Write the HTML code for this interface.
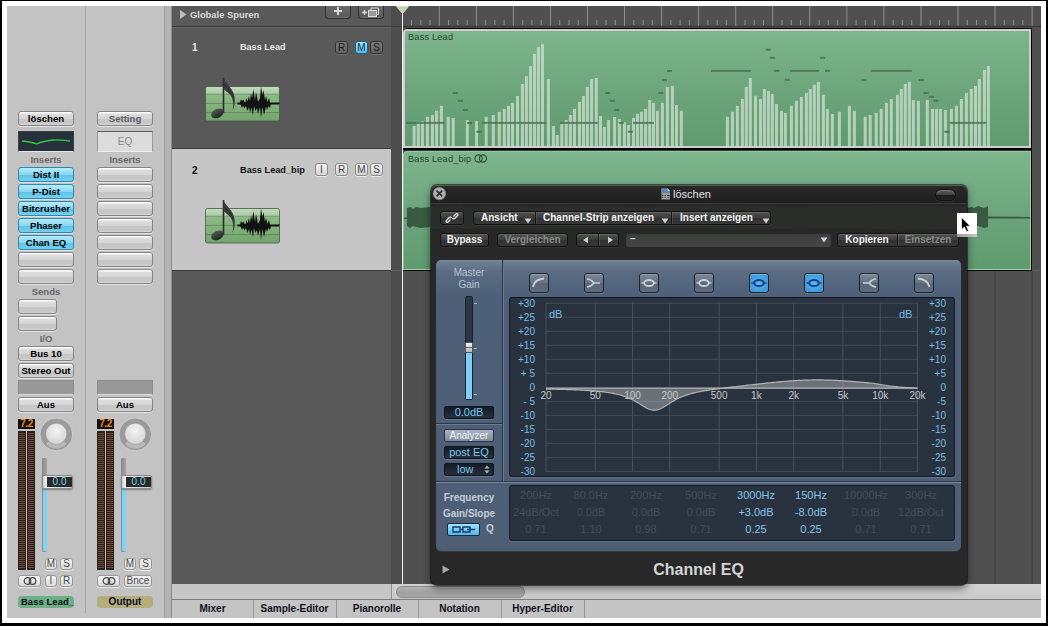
<!DOCTYPE html><html><head><meta charset="utf-8"><style>
*{margin:0;padding:0;box-sizing:border-box}
html,body{width:1048px;height:626px;overflow:hidden;background:#000}
body{position:relative;font-family:"Liberation Sans",sans-serif}
div{position:absolute}
.t{white-space:nowrap;line-height:1}
svg{position:absolute;overflow:visible}
</style></head><body>
<div style="left:2px;top:1px;width:1044px;height:622px;background:#fff"></div>
<div style="left:7px;top:6px;width:1034px;height:612px;background:#c3c3c3"></div>
<div style="left:85px;top:6px;width:1px;height:607px;background:#a6a6a6"></div>
<div style="left:164px;top:6px;width:1px;height:612px;background:#9c9c9c"></div>
<div style="left:165px;top:6px;width:6px;height:612px;background:#b3b3b3"></div>
<div style="left:171px;top:6px;width:1px;height:612px;background:#8e8e8e"></div>
<div style="left:172px;top:6px;width:219px;height:578px;background:#595959"></div>
<div style="left:172px;top:26px;width:219px;height:1px;background:#3b3b3b"></div>
<div style="left:172px;top:27px;width:219px;height:1px;background:#666"></div>
<div style="left:172px;top:148px;width:219px;height:1px;background:#3b3b3b"></div>
<div style="left:172px;top:149px;width:219px;height:121px;background:#c6c6c6"></div>
<div style="left:172px;top:270px;width:219px;height:1px;background:#3b3b3b"></div>
<div style="left:391px;top:6px;width:11px;height:578px;background:#4d4d4d"></div>
<div style="left:391px;top:26px;width:11px;height:1px;background:#3b3b3b"></div>
<div style="left:391px;top:270px;width:11px;height:1px;background:#5e5e5e"></div>
<div style="left:403px;top:6px;width:638px;height:578px;background:#505050"></div>
<div style="left:1032px;top:270px;width:9px;height:1px;background:#5e5e5e"></div>
<div style="left:403px;top:26px;width:638px;height:1px;background:#333"></div>
<div style="left:402px;top:6px;width:1px;height:578px;background:#f0f0f0"></div>
<svg style="left:403px;top:6px" width="638" height="22"><rect x="8.0" y="14" width="1" height="5" fill="#8f8f8f"/><rect x="17.3" y="14" width="1" height="5" fill="#8f8f8f"/><rect x="26.5" y="14" width="1" height="5" fill="#8f8f8f"/><rect x="35.8" y="0" width="1" height="20" fill="#8f8f8f"/><rect x="45.1" y="14" width="1" height="5" fill="#8f8f8f"/><rect x="54.3" y="14" width="1" height="5" fill="#8f8f8f"/><rect x="63.6" y="14" width="1" height="5" fill="#8f8f8f"/><rect x="72.9" y="0" width="1" height="20" fill="#8f8f8f"/><rect x="82.1" y="14" width="1" height="5" fill="#8f8f8f"/><rect x="91.4" y="14" width="1" height="5" fill="#8f8f8f"/><rect x="100.6" y="14" width="1" height="5" fill="#8f8f8f"/><rect x="109.9" y="0" width="1" height="20" fill="#8f8f8f"/><rect x="119.2" y="14" width="1" height="5" fill="#8f8f8f"/><rect x="128.4" y="14" width="1" height="5" fill="#8f8f8f"/><rect x="137.7" y="14" width="1" height="5" fill="#8f8f8f"/><rect x="147.0" y="0" width="1" height="20" fill="#8f8f8f"/><rect x="156.2" y="14" width="1" height="5" fill="#8f8f8f"/><rect x="165.5" y="14" width="1" height="5" fill="#8f8f8f"/><rect x="174.7" y="14" width="1" height="5" fill="#8f8f8f"/><rect x="184.0" y="0" width="1" height="20" fill="#8f8f8f"/><rect x="193.3" y="14" width="1" height="5" fill="#8f8f8f"/><rect x="202.5" y="14" width="1" height="5" fill="#8f8f8f"/><rect x="211.8" y="14" width="1" height="5" fill="#8f8f8f"/><rect x="221.0" y="0" width="1" height="20" fill="#8f8f8f"/><rect x="230.3" y="14" width="1" height="5" fill="#8f8f8f"/><rect x="239.6" y="14" width="1" height="5" fill="#8f8f8f"/><rect x="248.8" y="14" width="1" height="5" fill="#8f8f8f"/><rect x="258.1" y="0" width="1" height="20" fill="#8f8f8f"/><rect x="267.4" y="14" width="1" height="5" fill="#8f8f8f"/><rect x="276.6" y="14" width="1" height="5" fill="#8f8f8f"/><rect x="285.9" y="14" width="1" height="5" fill="#8f8f8f"/><rect x="295.1" y="0" width="1" height="20" fill="#8f8f8f"/><rect x="304.4" y="14" width="1" height="5" fill="#8f8f8f"/><rect x="313.7" y="14" width="1" height="5" fill="#8f8f8f"/><rect x="322.9" y="14" width="1" height="5" fill="#8f8f8f"/><rect x="332.2" y="0" width="1" height="20" fill="#8f8f8f"/><rect x="341.5" y="14" width="1" height="5" fill="#8f8f8f"/><rect x="350.7" y="14" width="1" height="5" fill="#8f8f8f"/><rect x="360.0" y="14" width="1" height="5" fill="#8f8f8f"/><rect x="369.2" y="0" width="1" height="20" fill="#8f8f8f"/><rect x="378.5" y="14" width="1" height="5" fill="#8f8f8f"/><rect x="387.8" y="14" width="1" height="5" fill="#8f8f8f"/><rect x="397.0" y="14" width="1" height="5" fill="#8f8f8f"/><rect x="406.3" y="0" width="1" height="20" fill="#8f8f8f"/><rect x="415.6" y="14" width="1" height="5" fill="#8f8f8f"/><rect x="424.8" y="14" width="1" height="5" fill="#8f8f8f"/><rect x="434.1" y="14" width="1" height="5" fill="#8f8f8f"/><rect x="443.3" y="0" width="1" height="20" fill="#8f8f8f"/><rect x="452.6" y="14" width="1" height="5" fill="#8f8f8f"/><rect x="461.9" y="14" width="1" height="5" fill="#8f8f8f"/><rect x="471.1" y="14" width="1" height="5" fill="#8f8f8f"/><rect x="480.4" y="0" width="1" height="20" fill="#8f8f8f"/><rect x="489.7" y="14" width="1" height="5" fill="#8f8f8f"/><rect x="498.9" y="14" width="1" height="5" fill="#8f8f8f"/><rect x="508.2" y="14" width="1" height="5" fill="#8f8f8f"/><rect x="517.5" y="0" width="1" height="20" fill="#8f8f8f"/><rect x="526.7" y="14" width="1" height="5" fill="#8f8f8f"/><rect x="536.0" y="14" width="1" height="5" fill="#8f8f8f"/><rect x="545.2" y="14" width="1" height="5" fill="#8f8f8f"/><rect x="554.5" y="0" width="1" height="20" fill="#8f8f8f"/><rect x="563.8" y="14" width="1" height="5" fill="#8f8f8f"/><rect x="573.0" y="14" width="1" height="5" fill="#8f8f8f"/><rect x="582.3" y="14" width="1" height="5" fill="#8f8f8f"/><rect x="591.5" y="0" width="1" height="20" fill="#8f8f8f"/><rect x="600.8" y="14" width="1" height="5" fill="#8f8f8f"/><rect x="610.1" y="14" width="1" height="5" fill="#8f8f8f"/><rect x="619.3" y="14" width="1" height="5" fill="#8f8f8f"/><rect x="628.6" y="0" width="1" height="20" fill="#8f8f8f"/></svg>
<svg style="left:396px;top:6px" width="13" height="9"><path d="M0.5 0.5 L12.5 0.5 L6.5 7.5 Z" fill="#b6d8a8" stroke="#e8f3e0" stroke-width="0.8"/></svg>
<svg style="left:403px;top:271px" width="638" height="313"><rect x="35.8" y="0" width="1" height="313" fill="#3e3e3e"/><rect x="72.9" y="0" width="1" height="313" fill="#3e3e3e"/><rect x="109.9" y="0" width="1" height="313" fill="#3e3e3e"/><rect x="147.0" y="0" width="1" height="313" fill="#3e3e3e"/><rect x="184.0" y="0" width="1" height="313" fill="#3e3e3e"/><rect x="221.0" y="0" width="1" height="313" fill="#3e3e3e"/><rect x="258.1" y="0" width="1" height="313" fill="#3e3e3e"/><rect x="295.1" y="0" width="1" height="313" fill="#3e3e3e"/><rect x="332.2" y="0" width="1" height="313" fill="#3e3e3e"/><rect x="369.2" y="0" width="1" height="313" fill="#3e3e3e"/><rect x="406.3" y="0" width="1" height="313" fill="#3e3e3e"/><rect x="443.3" y="0" width="1" height="313" fill="#3e3e3e"/><rect x="480.4" y="0" width="1" height="313" fill="#3e3e3e"/><rect x="517.5" y="0" width="1" height="313" fill="#3e3e3e"/><rect x="554.5" y="0" width="1" height="313" fill="#3e3e3e"/><rect x="591.5" y="0" width="1" height="313" fill="#3e3e3e"/><rect x="628.6" y="0" width="1" height="313" fill="#3e3e3e"/></svg>
<div style="left:403px;top:28px;width:629px;height:122px;background:#000;border-radius:5px 0 0 0"></div>
<div style="left:403px;top:29px;width:628px;height:119px;background:linear-gradient(#7db68c,#6aa37a 60%,#609b6f);border:2px solid #cfcfcf;border-right-width:2px;border-radius:4px 0 0 0"></div>
<div style="left:403px;top:150px;width:629px;height:121px;background:#000;border-radius:5px 0 0 0"></div>
<div style="left:404px;top:150px;width:627px;height:1px;background:#3a3a3a"></div>
<div style="left:403px;top:151px;width:628px;height:119px;background:linear-gradient(#7db68c,#6aa37a 60%,#609b6f);border-right:1px solid #9ad4a4;border-bottom:1px solid #9ad4a4;border-radius:4px 0 0 0;box-shadow:inset 1px 1px 0 rgba(160,220,170,.5)"></div>
<div class="t" style="left:408px;top:33px;font-size:9.2px;letter-spacing:0.2px;color:#2a4434">Bass Lead</div>
<div class="t" style="left:408px;top:155px;font-size:9.2px;letter-spacing:0.2px;color:#2a4434">Bass Lead_bip</div>
<svg style="left:474px;top:154px" width="14" height="9"><circle cx="4.5" cy="4.5" r="3.6" fill="none" stroke="#2f4a38" stroke-width="1.1"/><circle cx="9" cy="4.5" r="3.6" fill="none" stroke="#2f4a38" stroke-width="1.1"/></svg>
<svg style="left:404px;top:29px" width="627" height="118"><rect x="8.6" y="97.0" width="3" height="20.0" fill="#cfe0cf" fill-opacity="0.75"/><rect x="12.8" y="92.8" width="3" height="24.2" fill="#cfe0cf" fill-opacity="0.75"/><rect x="16.9" y="92.2" width="3" height="24.8" fill="#cfe0cf" fill-opacity="0.75"/><rect x="21.9" y="87.8" width="3" height="29.2" fill="#cfe0cf" fill-opacity="0.75"/><rect x="26.9" y="86.0" width="3" height="31.0" fill="#cfe0cf" fill-opacity="0.75"/><rect x="31.1" y="81.8" width="3" height="35.2" fill="#cfe0cf" fill-opacity="0.75"/><rect x="35.9" y="76.8" width="3" height="40.2" fill="#cfe0cf" fill-opacity="0.75"/><rect x="42.7" y="87.8" width="3" height="29.2" fill="#cfe0cf" fill-opacity="0.75"/><rect x="47.7" y="88.9" width="3" height="28.1" fill="#cfe0cf" fill-opacity="0.75"/><rect x="61.8" y="91.0" width="3" height="26.0" fill="#cfe0cf" fill-opacity="0.75"/><rect x="71.0" y="92.0" width="3" height="25.0" fill="#cfe0cf" fill-opacity="0.75"/><rect x="80.7" y="87.8" width="3" height="29.2" fill="#cfe0cf" fill-opacity="0.75"/><rect x="87.8" y="86.0" width="3" height="31.0" fill="#cfe0cf" fill-opacity="0.75"/><rect x="93.8" y="82.9" width="3" height="34.1" fill="#cfe0cf" fill-opacity="0.75"/><rect x="98.8" y="80.0" width="3" height="37.0" fill="#cfe0cf" fill-opacity="0.75"/><rect x="103.0" y="76.8" width="3" height="40.2" fill="#cfe0cf" fill-opacity="0.75"/><rect x="107.0" y="73.9" width="3" height="43.1" fill="#cfe0cf" fill-opacity="0.75"/><rect x="112.0" y="67.0" width="3" height="50.0" fill="#cfe0cf" fill-opacity="0.75"/><rect x="116.9" y="55.0" width="3" height="62.0" fill="#cfe0cf" fill-opacity="0.75"/><rect x="120.9" y="47.1" width="3" height="69.9" fill="#cfe0cf" fill-opacity="0.75"/><rect x="125.0" y="37.0" width="3" height="80.0" fill="#cfe0cf" fill-opacity="0.75"/><rect x="129.0" y="24.9" width="3" height="92.1" fill="#cfe0cf" fill-opacity="0.75"/><rect x="132.9" y="18.0" width="3" height="99.0" fill="#cfe0cf" fill-opacity="0.75"/><rect x="137.0" y="14.9" width="3" height="102.1" fill="#cfe0cf" fill-opacity="0.75"/><rect x="142.9" y="50.0" width="3" height="67.0" fill="#cfe0cf" fill-opacity="0.75"/><rect x="147.9" y="97.0" width="3" height="20.0" fill="#cfe0cf" fill-opacity="0.75"/><rect x="151.8" y="106.0" width="3" height="11.0" fill="#cfe0cf" fill-opacity="0.75"/><rect x="156.3" y="94.9" width="3" height="22.1" fill="#cfe0cf" fill-opacity="0.75"/><rect x="160.7" y="91.0" width="3" height="26.0" fill="#cfe0cf" fill-opacity="0.75"/><rect x="164.9" y="86.0" width="3" height="31.0" fill="#cfe0cf" fill-opacity="0.75"/><rect x="169.0" y="79.9" width="3" height="37.1" fill="#cfe0cf" fill-opacity="0.75"/><rect x="174.0" y="72.9" width="3" height="44.1" fill="#cfe0cf" fill-opacity="0.75"/><rect x="178.0" y="67.0" width="3" height="50.0" fill="#cfe0cf" fill-opacity="0.75"/><rect x="181.9" y="57.9" width="3" height="59.1" fill="#cfe0cf" fill-opacity="0.75"/><rect x="186.1" y="50.0" width="3" height="67.0" fill="#cfe0cf" fill-opacity="0.75"/><rect x="190.8" y="49.0" width="3" height="68.0" fill="#cfe0cf" fill-opacity="0.75"/><rect x="195.0" y="87.0" width="3" height="30.0" fill="#cfe0cf" fill-opacity="0.75"/><rect x="198.9" y="98.0" width="3" height="19.0" fill="#cfe0cf" fill-opacity="0.75"/><rect x="203.1" y="91.0" width="3" height="26.0" fill="#cfe0cf" fill-opacity="0.75"/><rect x="209.1" y="88.0" width="3" height="29.0" fill="#cfe0cf" fill-opacity="0.75"/><rect x="213.9" y="89.9" width="3" height="27.1" fill="#cfe0cf" fill-opacity="0.75"/><rect x="218.9" y="93.0" width="3" height="24.0" fill="#cfe0cf" fill-opacity="0.75"/><rect x="223.0" y="96.0" width="3" height="21.0" fill="#cfe0cf" fill-opacity="0.75"/><rect x="228.0" y="88.9" width="3" height="28.1" fill="#cfe0cf" fill-opacity="0.75"/><rect x="232.0" y="84.9" width="3" height="32.1" fill="#cfe0cf" fill-opacity="0.75"/><rect x="235.9" y="82.8" width="3" height="34.2" fill="#cfe0cf" fill-opacity="0.75"/><rect x="240.1" y="79.9" width="3" height="37.1" fill="#cfe0cf" fill-opacity="0.75"/><rect x="244.2" y="71.0" width="3" height="46.0" fill="#cfe0cf" fill-opacity="0.75"/><rect x="248.0" y="73.9" width="3" height="43.1" fill="#cfe0cf" fill-opacity="0.75"/><rect x="251.9" y="81.8" width="3" height="35.2" fill="#cfe0cf" fill-opacity="0.75"/><rect x="256.9" y="73.9" width="3" height="43.1" fill="#cfe0cf" fill-opacity="0.75"/><rect x="261.9" y="57.9" width="3" height="59.1" fill="#cfe0cf" fill-opacity="0.75"/><rect x="266.9" y="56.9" width="3" height="60.1" fill="#cfe0cf" fill-opacity="0.75"/><rect x="271.0" y="76.0" width="3" height="41.0" fill="#cfe0cf" fill-opacity="0.75"/><rect x="275.8" y="81.8" width="3" height="35.2" fill="#cfe0cf" fill-opacity="0.75"/><rect x="321.9" y="87.8" width="3" height="29.2" fill="#cfe0cf" fill-opacity="0.75"/><rect x="326.9" y="82.8" width="3" height="34.2" fill="#cfe0cf" fill-opacity="0.75"/><rect x="331.9" y="76.8" width="3" height="40.2" fill="#cfe0cf" fill-opacity="0.75"/><rect x="336.9" y="70.0" width="3" height="47.0" fill="#cfe0cf" fill-opacity="0.75"/><rect x="340.8" y="57.9" width="3" height="59.1" fill="#cfe0cf" fill-opacity="0.75"/><rect x="344.8" y="49.0" width="3" height="68.0" fill="#cfe0cf" fill-opacity="0.75"/><rect x="350.0" y="66.8" width="3" height="50.2" fill="#cfe0cf" fill-opacity="0.75"/><rect x="355.0" y="70.0" width="3" height="47.0" fill="#cfe0cf" fill-opacity="0.75"/><rect x="358.9" y="60.0" width="3" height="57.0" fill="#cfe0cf" fill-opacity="0.75"/><rect x="362.9" y="61.9" width="3" height="55.1" fill="#cfe0cf" fill-opacity="0.75"/><rect x="366.8" y="65.0" width="3" height="52.0" fill="#cfe0cf" fill-opacity="0.75"/><rect x="371.0" y="75.0" width="3" height="42.0" fill="#cfe0cf" fill-opacity="0.75"/><rect x="376.0" y="81.8" width="3" height="35.2" fill="#cfe0cf" fill-opacity="0.75"/><rect x="379.9" y="83.9" width="3" height="33.1" fill="#cfe0cf" fill-opacity="0.75"/><rect x="385.9" y="76.8" width="3" height="40.2" fill="#cfe0cf" fill-opacity="0.75"/><rect x="390.9" y="71.8" width="3" height="45.2" fill="#cfe0cf" fill-opacity="0.75"/><rect x="395.9" y="67.9" width="3" height="49.1" fill="#cfe0cf" fill-opacity="0.75"/><rect x="400.9" y="63.9" width="3" height="53.1" fill="#cfe0cf" fill-opacity="0.75"/><rect x="404.8" y="60.0" width="3" height="57.0" fill="#cfe0cf" fill-opacity="0.75"/><rect x="408.8" y="55.8" width="3" height="61.2" fill="#cfe0cf" fill-opacity="0.75"/><rect x="412.9" y="52.9" width="3" height="64.1" fill="#cfe0cf" fill-opacity="0.75"/><rect x="417.9" y="65.8" width="3" height="51.2" fill="#cfe0cf" fill-opacity="0.75"/><rect x="421.9" y="79.9" width="3" height="37.1" fill="#cfe0cf" fill-opacity="0.75"/><rect x="426.9" y="84.9" width="3" height="32.1" fill="#cfe0cf" fill-opacity="0.75"/><rect x="433.9" y="82.8" width="3" height="34.2" fill="#cfe0cf" fill-opacity="0.75"/><rect x="443.9" y="76.8" width="3" height="40.2" fill="#cfe0cf" fill-opacity="0.75"/><rect x="448.9" y="81.8" width="3" height="35.2" fill="#cfe0cf" fill-opacity="0.75"/><rect x="459.7" y="87.8" width="3" height="29.2" fill="#cfe0cf" fill-opacity="0.75"/><rect x="464.7" y="86.0" width="3" height="31.0" fill="#cfe0cf" fill-opacity="0.75"/><rect x="470.7" y="83.9" width="3" height="33.1" fill="#cfe0cf" fill-opacity="0.75"/><rect x="475.7" y="79.9" width="3" height="37.1" fill="#cfe0cf" fill-opacity="0.75"/><rect x="480.9" y="73.9" width="3" height="43.1" fill="#cfe0cf" fill-opacity="0.75"/><rect x="485.8" y="70.0" width="3" height="47.0" fill="#cfe0cf" fill-opacity="0.75"/><rect x="491.9" y="65.8" width="3" height="51.2" fill="#cfe0cf" fill-opacity="0.75"/><rect x="495.8" y="60.0" width="3" height="57.0" fill="#cfe0cf" fill-opacity="0.75"/><rect x="499.8" y="55.0" width="3" height="62.0" fill="#cfe0cf" fill-opacity="0.75"/><rect x="503.9" y="52.9" width="3" height="64.1" fill="#cfe0cf" fill-opacity="0.75"/><rect x="507.9" y="71.0" width="3" height="46.0" fill="#cfe0cf" fill-opacity="0.75"/><rect x="512.9" y="71.8" width="3" height="45.2" fill="#cfe0cf" fill-opacity="0.75"/><rect x="521.8" y="71.0" width="3" height="46.0" fill="#cfe0cf" fill-opacity="0.75"/><rect x="527.0" y="79.9" width="3" height="37.1" fill="#cfe0cf" fill-opacity="0.75"/><rect x="530.9" y="79.9" width="3" height="37.1" fill="#cfe0cf" fill-opacity="0.75"/><rect x="534.9" y="79.9" width="3" height="37.1" fill="#cfe0cf" fill-opacity="0.75"/><rect x="539.9" y="81.0" width="3" height="36.0" fill="#cfe0cf" fill-opacity="0.75"/><rect x="545.9" y="79.9" width="3" height="37.1" fill="#cfe0cf" fill-opacity="0.75"/><rect x="550.9" y="76.8" width="3" height="40.2" fill="#cfe0cf" fill-opacity="0.75"/><rect x="555.9" y="70.0" width="3" height="47.0" fill="#cfe0cf" fill-opacity="0.75"/><rect x="560.9" y="63.9" width="3" height="53.1" fill="#cfe0cf" fill-opacity="0.75"/><rect x="565.8" y="60.0" width="3" height="57.0" fill="#cfe0cf" fill-opacity="0.75"/><rect x="570.0" y="56.9" width="3" height="60.1" fill="#cfe0cf" fill-opacity="0.75"/><rect x="573.9" y="50.0" width="3" height="67.0" fill="#cfe0cf" fill-opacity="0.75"/><rect x="578.9" y="40.9" width="3" height="76.1" fill="#cfe0cf" fill-opacity="0.75"/><rect x="582.9" y="36.9" width="3" height="80.1" fill="#cfe0cf" fill-opacity="0.75"/><rect x="2.0" y="92.9" width="38.7" height="2" fill="#4a6e52" fill-opacity="0.8"/><rect x="78.0" y="92.9" width="64.5" height="2" fill="#4a6e52" fill-opacity="0.8"/><rect x="156.0" y="92.9" width="37.8" height="2" fill="#4a6e52" fill-opacity="0.8"/><rect x="229.0" y="92.9" width="20.9" height="2" fill="#4a6e52" fill-opacity="0.8"/><rect x="545.3" y="92.9" width="37.2" height="2" fill="#4a6e52" fill-opacity="0.8"/><rect x="307.0" y="40.9" width="39.9" height="2" fill="#4a6e52" fill-opacity="0.8"/><rect x="386.0" y="40.9" width="28.9" height="2" fill="#4a6e52" fill-opacity="0.8"/><rect x="466.8" y="40.9" width="41.1" height="2" fill="#4a6e52" fill-opacity="0.8"/><rect x="48.8" y="63.0" width="5" height="2" fill="#4a6e52" fill-opacity="0.85"/><rect x="53.8" y="70.8" width="5" height="2" fill="#4a6e52" fill-opacity="0.85"/><rect x="59.0" y="80.0" width="5" height="2" fill="#4a6e52" fill-opacity="0.85"/><rect x="63.1" y="93.0" width="5" height="2" fill="#4a6e52" fill-opacity="0.85"/><rect x="72.5" y="101.8" width="5" height="2" fill="#4a6e52" fill-opacity="0.85"/><rect x="201.3" y="63.0" width="5" height="2" fill="#4a6e52" fill-opacity="0.85"/><rect x="205.8" y="70.8" width="5" height="2" fill="#4a6e52" fill-opacity="0.85"/><rect x="210.4" y="80.0" width="5" height="2" fill="#4a6e52" fill-opacity="0.85"/><rect x="214.8" y="92.9" width="5" height="2" fill="#4a6e52" fill-opacity="0.85"/><rect x="223.9" y="101.8" width="5" height="2" fill="#4a6e52" fill-opacity="0.85"/><rect x="254.3" y="63.0" width="5" height="2" fill="#4a6e52" fill-opacity="0.85"/><rect x="257.8" y="50.0" width="5" height="2" fill="#4a6e52" fill-opacity="0.85"/><rect x="263.0" y="41.0" width="5" height="2" fill="#4a6e52" fill-opacity="0.85"/><rect x="361.7" y="19.7" width="5" height="2" fill="#4a6e52" fill-opacity="0.85"/><rect x="365.8" y="27.8" width="5" height="2" fill="#4a6e52" fill-opacity="0.85"/><rect x="370.4" y="40.9" width="5" height="2" fill="#4a6e52" fill-opacity="0.85"/><rect x="380.8" y="49.8" width="5" height="2" fill="#4a6e52" fill-opacity="0.85"/><rect x="416.1" y="27.8" width="5" height="2" fill="#4a6e52" fill-opacity="0.85"/><rect x="421.1" y="40.9" width="5" height="2" fill="#4a6e52" fill-opacity="0.85"/><rect x="457.4" y="50.0" width="5" height="2" fill="#4a6e52" fill-opacity="0.85"/><rect x="514.8" y="50.0" width="5" height="2" fill="#4a6e52" fill-opacity="0.85"/><rect x="519.5" y="63.0" width="5" height="2" fill="#4a6e52" fill-opacity="0.85"/><rect x="524.9" y="66.9" width="5" height="2" fill="#4a6e52" fill-opacity="0.85"/><rect x="529.3" y="70.8" width="5" height="2" fill="#4a6e52" fill-opacity="0.85"/><rect x="540.3" y="101.8" width="5" height="2" fill="#4a6e52" fill-opacity="0.85"/></svg>
<svg style="left:403px;top:205px" width="30" height="26"><path d="M1 12.5 H4 V3 L8 2 L10 4 L13 2 L18 3 L27 2 V22 L18 23 L13 22 L10 21 L7 23 L4 21 V14 H1 Z" fill="#3a5a44"/></svg>
<svg style="left:966px;top:204px" width="66" height="26"><path d="M0 4 L6 3 L8 4 L12 2 L18 4 L22 2 V12.5 L64 13 V14.5 L22 14.5 V23 L18 24 L12 22 L8 23 L0 23 Z" fill="#3a5a44"/></svg>
<div style="left:172px;top:584px;width:219px;height:16px;background:#c6c6c6"></div>
<div style="left:391px;top:584px;width:1px;height:16px;background:#8e8e8e"></div>
<div style="left:392px;top:584px;width:649px;height:16px;background:linear-gradient(#d2d2d2,#c9c9c9)"></div>
<div style="left:396px;top:586px;width:129px;height:12px;background:linear-gradient(#b4b4b4,#a0a0a0 60%,#a8a8a8);border:1px solid #8a8a8a;border-radius:6px"></div>
<div style="left:172px;top:599px;width:869px;height:1px;background:#7c7c7c"></div>
<div style="left:172px;top:600px;width:869px;height:18px;background:#c4c4c4"></div>
<div style="left:253px;top:600px;width:1px;height:18px;background:#969696"></div>
<div class="t" style="left:172px;top:604px;width:81px;text-align:center;font-size:10px;font-weight:bold;color:#101020">Mixer</div>
<div style="left:336px;top:600px;width:1px;height:18px;background:#969696"></div>
<div class="t" style="left:253px;top:604px;width:83px;text-align:center;font-size:10px;font-weight:bold;color:#101020">Sample-Editor</div>
<div style="left:418px;top:600px;width:1px;height:18px;background:#969696"></div>
<div class="t" style="left:336px;top:604px;width:82px;text-align:center;font-size:10px;font-weight:bold;color:#101020">Pianorolle</div>
<div style="left:501px;top:600px;width:1px;height:18px;background:#969696"></div>
<div class="t" style="left:418px;top:604px;width:83px;text-align:center;font-size:10px;font-weight:bold;color:#101020">Notation</div>
<div style="left:584px;top:600px;width:1px;height:18px;background:#969696"></div>
<div class="t" style="left:501px;top:604px;width:83px;text-align:center;font-size:10px;font-weight:bold;color:#101020">Hyper-Editor</div>
<div style="left:431px;top:185px;width:535.6px;height:400px;background:#282828;border-radius:6px;box-shadow:0 3px 8px rgba(0,0,0,.55),0 0 0 1px rgba(0,0,0,.5)"></div>
<div style="left:431px;top:185px;width:535.6px;height:18px;background:linear-gradient(#2a2a2a,#1f1f1f);border-radius:6px 6px 0 0;box-shadow:inset 0 1px 0 #5a5a5a"></div>
<div style="left:431px;top:203px;width:535.6px;height:1px;background:#3a3a3a"></div>
<div style="left:431px;top:204px;width:535.6px;height:52px;background:#272727"></div>
<svg style="left:431px;top:204px" width="536" height="30"><path d="M0 3 L30 2 L34 4 L60 2 L110 3 L150 1 L200 3 L260 2 L300 1 L350 3 L420 2 L470 1 L536 3 V25 L470 26 L420 24 L350 25 L300 26 L260 24 L200 25 L150 24 L110 26 L60 24 L34 25 L30 24 L0 25 Z" fill="rgba(70,100,70,.10)"/></svg>
<svg style="left:432px;top:186px" width="15" height="15"><circle cx="7.4" cy="7.5" r="6.3" fill="#aeaeae" stroke="#7a7a7a" stroke-width="0.6"/><path d="M4.6 4.7 L10.2 10.3 M10.2 4.7 L4.6 10.3" stroke="#2e2e2e" stroke-width="1.7"/></svg>
<svg style="left:661px;top:188px" width="10" height="12"><path d="M0.5 0.5 H6.5 L9 3 V11.5 H0.5 Z" fill="#9a9a9a"/><path d="M0.5 0.5 H6.5 L9 3 V5 H0.5 Z" fill="#5c86b0"/><path d="M6.5 0.5 V3 H9" fill="#ddd"/><rect x="1" y="7" width="7.5" height="1.2" fill="#3a3a3a"/><rect x="1" y="9" width="7.5" height="1" fill="#666"/><rect x="2.5" y="6.5" width="1" height="4" fill="#aaa"/><rect x="5" y="6.5" width="1" height="4" fill="#aaa"/></svg>
<div class="t" style="left:673px;top:189px;font-size:11px;color:#e4e4e4">löschen</div>
<div style="left:935px;top:189px;width:21px;height:12px;border-radius:6px;background:linear-gradient(#5e5e5e,#404040 50%,#1c1c1c 55%,#262626);border:1px solid #111;box-shadow:inset 0 1px 0 rgba(255,255,255,.18),0 1px 0 rgba(255,255,255,.08)"></div>
<div style="left:440px;top:211px;width:24px;height:14px;border:1px solid #121212;border-radius:3px;background:linear-gradient(#505050,#3c3c3c 50%,#303030 51%,#383838);box-shadow:inset 0 1px 0 rgba(255,255,255,.12),0 1px 0 rgba(255,255,255,.06);font-size:9.5px;font-weight:bold;color:#f2f2f2;text-align:center;line-height:12px;white-space:nowrap;"></div>
<svg style="left:445px;top:213px" width="14" height="10"><path d="M5.5 6.5 L3 9 C1.8 10 0.5 8.6 1.3 7.6 L4 4.8 C5 3.8 6.3 4.3 6.6 5.1 M8.5 3.5 L11 1 C12.2 0 13.5 1.4 12.7 2.4 L10 5.2 C9 6.2 7.7 5.7 7.4 4.9" fill="none" stroke="#e0e0e0" stroke-width="1.4"/></svg>
<div style="left:473px;top:211px;width:298px;height:14px;border:1px solid #121212;border-radius:3px;background:linear-gradient(#505050,#3c3c3c 50%,#303030 51%,#383838);box-shadow:inset 0 1px 0 rgba(255,255,255,.12),0 1px 0 rgba(255,255,255,.06);font-size:9.5px;font-weight:bold;color:#f2f2f2;text-align:center;line-height:12px;white-space:nowrap;"></div>
<div style="left:535px;top:212px;width:1px;height:12px;background:#181818;box-shadow:1px 0 0 rgba(255,255,255,.1)"></div>
<div style="left:671px;top:212px;width:1px;height:12px;background:#181818;box-shadow:1px 0 0 rgba(255,255,255,.1)"></div>
<div class="t" style="left:481px;top:213px;font-size:10px;font-weight:bold;color:#f4f4f4">Ansicht</div>
<svg style="left:524px;top:218px" width="8" height="6"><path d="M0.5 0.5 H7.5 L4 5.5 Z" fill="#cfcfcf"/></svg>
<div class="t" style="left:543px;top:213px;font-size:10px;font-weight:bold;color:#f4f4f4">Channel-Strip anzeigen</div>
<svg style="left:661px;top:218px" width="8" height="6"><path d="M0.5 0.5 H7.5 L4 5.5 Z" fill="#cfcfcf"/></svg>
<div class="t" style="left:680px;top:213px;font-size:10px;font-weight:bold;color:#f4f4f4">Insert anzeigen</div>
<svg style="left:762px;top:218px" width="8" height="6"><path d="M0.5 0.5 H7.5 L4 5.5 Z" fill="#cfcfcf"/></svg>
<div style="left:440px;top:233px;width:49px;height:14px;border:1px solid #121212;border-radius:3px;background:linear-gradient(#505050,#3c3c3c 50%,#303030 51%,#383838);box-shadow:inset 0 1px 0 rgba(255,255,255,.12),0 1px 0 rgba(255,255,255,.06);font-size:10px;font-weight:bold;color:#f2f2f2;text-align:center;line-height:12px;white-space:nowrap;">Bypass</div>
<div style="left:497px;top:233px;width:71px;height:14px;border:1px solid #121212;border-radius:3px;background:linear-gradient(#505050,#3c3c3c 50%,#303030 51%,#383838);box-shadow:inset 0 1px 0 rgba(255,255,255,.12),0 1px 0 rgba(255,255,255,.06);font-size:10px;font-weight:bold;color:#8a8a8a;text-align:center;line-height:12px;white-space:nowrap;">Vergleichen</div>
<div style="left:576px;top:233px;width:43px;height:14px;border:1px solid #121212;border-radius:3px;background:linear-gradient(#505050,#3c3c3c 50%,#303030 51%,#383838);box-shadow:inset 0 1px 0 rgba(255,255,255,.12),0 1px 0 rgba(255,255,255,.06);font-size:9.5px;font-weight:bold;color:#f2f2f2;text-align:center;line-height:12px;white-space:nowrap;"></div>
<div style="left:598px;top:234px;width:1px;height:12px;background:#181818;box-shadow:1px 0 0 rgba(255,255,255,.1)"></div>
<svg style="left:582px;top:236px" width="32" height="8"><path d="M1 4 L6 0.8 V7.2 Z M31 4 L26 0.8 V7.2 Z" fill="#cfcfcf"/></svg>
<div style="left:626px;top:233px;width:205px;height:14px;border-radius:3px;background:linear-gradient(#3c3d3c,#444544);box-shadow:inset 0 1px 1px rgba(0,0,0,.35)"></div>
<div class="t" style="left:630px;top:234px;font-size:10px;font-weight:bold;color:#d8d8d8">&ndash;</div>
<svg style="left:820px;top:237px" width="8" height="6"><path d="M0.5 0.5 H7.5 L4 5.5 Z" fill="#cfcfcf"/></svg>
<div style="left:837px;top:233px;width:122px;height:14px;border:1px solid #121212;border-radius:3px;background:linear-gradient(#505050,#3c3c3c 50%,#303030 51%,#383838);box-shadow:inset 0 1px 0 rgba(255,255,255,.12),0 1px 0 rgba(255,255,255,.06);font-size:9.5px;font-weight:bold;color:#f2f2f2;text-align:center;line-height:12px;white-space:nowrap;"></div>
<div style="left:897px;top:234px;width:1px;height:12px;background:#181818;box-shadow:1px 0 0 rgba(255,255,255,.1)"></div>
<div class="t" style="left:837px;top:235px;font-size:10px;font-weight:bold;color:#f4f4f4;width:60px;text-align:center">Kopieren</div>
<div class="t" style="left:898px;top:235px;font-size:10px;font-weight:bold;color:#8a8a8a;width:60px;text-align:center">Einsetzen</div>
<div style="left:436px;top:260px;width:525px;height:291px;background:linear-gradient(#8597ad 0px,#6f8196 1px,#5a6c82 12px,#4e6078 37px,#4d5e75 100%);border-radius:5px;box-shadow:0 1px 0 rgba(255,255,255,.08)"></div>
<div style="left:502px;top:260px;width:1px;height:222px;background:#2c3848"></div>
<div style="left:503px;top:260px;width:1px;height:222px;background:#6a7b90"></div>
<div style="left:529px;top:273px;width:20px;height:20px;border:1px solid #1c2430;border-radius:3px;background:linear-gradient(#7a8796,#657282 50%,#5a6676 51%,#5f6b7b);box-shadow:inset 0 1px 0 rgba(255,255,255,.2),0 1px 0 rgba(255,255,255,.1)"></div>
<svg style="left:529px;top:273px" width="20" height="20"><path d="M4 14 C5 8 9 6 15 5.5" stroke="#c9d0d8" stroke-width="1.8" fill="none"/></svg>
<div style="left:584px;top:273px;width:20px;height:20px;border:1px solid #1c2430;border-radius:3px;background:linear-gradient(#7a8796,#657282 50%,#5a6676 51%,#5f6b7b);box-shadow:inset 0 1px 0 rgba(255,255,255,.2),0 1px 0 rgba(255,255,255,.1)"></div>
<svg style="left:584px;top:273px" width="20" height="20"><path d="M3 6 C7 6 9 9 10 10 H16 M3 14 C7 14 9 11 10 10" stroke="#c9d0d8" stroke-width="1.6" fill="none"/></svg>
<div style="left:639px;top:273px;width:20px;height:20px;border:1px solid #1c2430;border-radius:3px;background:linear-gradient(#7a8796,#657282 50%,#5a6676 51%,#5f6b7b);box-shadow:inset 0 1px 0 rgba(255,255,255,.2),0 1px 0 rgba(255,255,255,.1)"></div>
<svg style="left:639px;top:273px" width="20" height="20"><path d="M2.5 10 H5 M15 10 H17.5" stroke="#c9d0d8" stroke-width="1.6"/><ellipse cx="10" cy="10" rx="4.8" ry="3" fill="none" stroke="#c9d0d8" stroke-width="1.8"/></svg>
<div style="left:694px;top:273px;width:20px;height:20px;border:1px solid #1c2430;border-radius:3px;background:linear-gradient(#7a8796,#657282 50%,#5a6676 51%,#5f6b7b);box-shadow:inset 0 1px 0 rgba(255,255,255,.2),0 1px 0 rgba(255,255,255,.1)"></div>
<svg style="left:694px;top:273px" width="20" height="20"><path d="M2.5 10 H5 M15 10 H17.5" stroke="#c9d0d8" stroke-width="1.6"/><ellipse cx="10" cy="10" rx="4.8" ry="3" fill="none" stroke="#c9d0d8" stroke-width="1.8"/></svg>
<div style="left:749px;top:273px;width:20px;height:20px;border:1px solid #1c2430;border-radius:3px;background:radial-gradient(circle at 50% 50%,#54b8f0,#3a92d0);box-shadow:inset 0 1px 0 rgba(255,255,255,.25),0 1px 0 rgba(255,255,255,.1)"></div>
<svg style="left:749px;top:273px" width="20" height="20"><path d="M2.5 10 H5 M15 10 H17.5" stroke="#1a3f8a" stroke-width="1.6"/><ellipse cx="10" cy="10" rx="4.8" ry="3" fill="none" stroke="#1a3f8a" stroke-width="2.0"/></svg>
<div style="left:804px;top:273px;width:20px;height:20px;border:1px solid #1c2430;border-radius:3px;background:radial-gradient(circle at 50% 50%,#54b8f0,#3a92d0);box-shadow:inset 0 1px 0 rgba(255,255,255,.25),0 1px 0 rgba(255,255,255,.1)"></div>
<svg style="left:804px;top:273px" width="20" height="20"><path d="M2.5 10 H5 M15 10 H17.5" stroke="#1a3f8a" stroke-width="1.6"/><ellipse cx="10" cy="10" rx="4.8" ry="3" fill="none" stroke="#1a3f8a" stroke-width="2.0"/></svg>
<div style="left:859px;top:273px;width:20px;height:20px;border:1px solid #1c2430;border-radius:3px;background:linear-gradient(#7a8796,#657282 50%,#5a6676 51%,#5f6b7b);box-shadow:inset 0 1px 0 rgba(255,255,255,.2),0 1px 0 rgba(255,255,255,.1)"></div>
<svg style="left:859px;top:273px" width="20" height="20"><path d="M17 6 C13 6 11 9 10 10 H4 M17 14 C13 14 11 11 10 10" stroke="#c9d0d8" stroke-width="1.6" fill="none"/></svg>
<div style="left:914px;top:273px;width:20px;height:20px;border:1px solid #1c2430;border-radius:3px;background:linear-gradient(#7a8796,#657282 50%,#5a6676 51%,#5f6b7b);box-shadow:inset 0 1px 0 rgba(255,255,255,.2),0 1px 0 rgba(255,255,255,.1)"></div>
<svg style="left:914px;top:273px" width="20" height="20"><path d="M4 5.5 C10 6 14 8 15.5 14" stroke="#c9d0d8" stroke-width="1.8" fill="none"/></svg>
<div class="t" style="left:436px;top:268px;font-size:10px;color:#b8c4d0;width:66px;text-align:center">Master</div>
<div class="t" style="left:436px;top:280px;font-size:10px;color:#b8c4d0;width:66px;text-align:center">Gain</div>
<div style="left:465px;top:296px;width:8px;height:104px;background:#2a3646;border:1px solid #1a2230;border-radius:2px"></div>
<div style="left:466px;top:353px;width:6px;height:46px;background:#7fcef6"></div>
<div style="left:465px;top:342px;width:8px;height:11px;background:linear-gradient(#f0f0f0,#b8b8b8);border:1px solid #555;border-radius:1px"></div>
<div style="left:466px;top:347px;width:6px;height:1px;background:#666"></div>
<div style="left:474px;top:303px;width:3px;height:1px;background:#aab4c0"></div>
<div style="left:474px;top:348px;width:3px;height:1px;background:#aab4c0"></div>
<div style="left:474px;top:394px;width:3px;height:1px;background:#aab4c0"></div>
<div style="left:444px;top:406px;width:50px;height:13px;background:linear-gradient(#141c26,#26303c);border:1px solid #0e141c;border-radius:2px;box-shadow:0 1px 0 rgba(255,255,255,.15);font-size:11px;color:#78c6ee;text-align:center;line-height:11px">0.0dB</div>
<div style="left:436px;top:423px;width:66px;height:1px;background:#2c3848"></div>
<div style="left:436px;top:424px;width:66px;height:1px;background:#6a7b90"></div>
<div style="left:444px;top:429px;width:50px;height:13px;background:linear-gradient(#a8b4c2,#7d8a9a);border:1px solid #2a3440;border-radius:2px;font-size:10px;color:#f0f4f8;text-align:center;line-height:11px">Analyzer</div>
<div style="left:444px;top:446px;width:50px;height:13px;background:linear-gradient(#141c26,#26303c);border:1px solid #0e141c;border-radius:2px;box-shadow:0 1px 0 rgba(255,255,255,.15);font-size:11px;color:#78c6ee;text-align:center;line-height:11px">post EQ</div>
<div style="left:444px;top:463px;width:50px;height:13px;background:linear-gradient(#141c26,#26303c);border:1px solid #0e141c;border-radius:2px;box-shadow:0 1px 0 rgba(255,255,255,.15);font-size:11px;color:#78c6ee;line-height:11px;padding-left:12px">low</div>
<svg style="left:484px;top:465px" width="6" height="9"><path d="M0.5 3.5 L3 0.5 L5.5 3.5 Z M0.5 5.5 L3 8.5 L5.5 5.5 Z" fill="#a8b8c8"/></svg>
<div style="left:509px;top:297px;width:446px;height:180px;background:#29333f;border:1px solid #161c26;border-top-color:#10151c;border-radius:3px;box-shadow:0 1px 0 rgba(255,255,255,.12)"></div>
<svg style="left:509px;top:297px" width="446" height="180"><rect x="37" y="5.8" width="371.5" height="1" fill="#3f4a56"/><rect x="37" y="19.8" width="371.5" height="1" fill="#3f4a56"/><rect x="37" y="33.8" width="371.5" height="1" fill="#3f4a56"/><rect x="37" y="47.8" width="371.5" height="1" fill="#3f4a56"/><rect x="37" y="61.8" width="371.5" height="1" fill="#3f4a56"/><rect x="37" y="75.8" width="371.5" height="1" fill="#3f4a56"/><rect x="37" y="89.9" width="371.5" height="1" fill="#3f4a56"/><rect x="37" y="103.9" width="371.5" height="1" fill="#3f4a56"/><rect x="37" y="117.9" width="371.5" height="1" fill="#3f4a56"/><rect x="37" y="131.9" width="371.5" height="1" fill="#3f4a56"/><rect x="37" y="145.9" width="371.5" height="1" fill="#3f4a56"/><rect x="37" y="159.9" width="371.5" height="1" fill="#3f4a56"/><rect x="37" y="173.9" width="371.5" height="1" fill="#3f4a56"/><rect x="36.5" y="5.8" width="1" height="169.1" fill="#46515e"/><rect x="85.8" y="5.8" width="1" height="169.1" fill="#46515e"/><rect x="123.1" y="5.8" width="1" height="169.1" fill="#46515e"/><rect x="160.3" y="5.8" width="1" height="169.1" fill="#46515e"/><rect x="209.6" y="5.8" width="1" height="169.1" fill="#46515e"/><rect x="246.9" y="5.8" width="1" height="169.1" fill="#46515e"/><rect x="284.2" y="5.8" width="1" height="169.1" fill="#46515e"/><rect x="333.4" y="5.8" width="1" height="169.1" fill="#46515e"/><rect x="370.7" y="5.8" width="1" height="169.1" fill="#46515e"/><rect x="408.0" y="5.8" width="1" height="169.1" fill="#46515e"/><path d="M37.0 92.07 L38.0 92.08 L39.0 92.10 L40.0 92.12 L41.0 92.14 L42.0 92.16 L43.0 92.18 L44.0 92.20 L45.0 92.22 L46.0 92.24 L47.0 92.26 L48.0 92.29 L49.0 92.31 L50.0 92.33 L51.0 92.36 L52.0 92.38 L53.0 92.41 L54.0 92.44 L55.0 92.47 L56.0 92.49 L57.0 92.52 L58.0 92.55 L59.0 92.59 L60.0 92.62 L61.0 92.65 L62.0 92.69 L63.0 92.72 L64.0 92.76 L65.0 92.80 L66.0 92.84 L67.0 92.88 L68.0 92.92 L69.0 92.97 L70.0 93.01 L71.0 93.06 L72.0 93.11 L73.0 93.16 L74.0 93.21 L75.0 93.26 L76.0 93.32 L77.0 93.38 L78.0 93.44 L79.0 93.50 L80.0 93.57 L81.0 93.64 L82.0 93.71 L83.0 93.78 L84.0 93.86 L85.0 93.94 L86.0 94.02 L87.0 94.11 L88.0 94.20 L89.0 94.30 L90.0 94.40 L91.0 94.50 L92.0 94.61 L93.0 94.72 L94.0 94.84 L95.0 94.96 L96.0 95.09 L97.0 95.23 L98.0 95.37 L99.0 95.52 L100.0 95.67 L101.0 95.84 L102.0 96.01 L103.0 96.19 L104.0 96.38 L105.0 96.58 L106.0 96.79 L107.0 97.01 L108.0 97.24 L109.0 97.48 L110.0 97.74 L111.0 98.01 L112.0 98.29 L113.0 98.59 L114.0 98.90 L115.0 99.23 L116.0 99.58 L117.0 99.95 L118.0 100.33 L119.0 100.73 L120.0 101.16 L121.0 101.60 L122.0 102.06 L123.0 102.55 L124.0 103.05 L125.0 103.58 L126.0 104.12 L127.0 104.68 L128.0 105.26 L129.0 105.86 L130.0 106.47 L131.0 107.08 L132.0 107.70 L133.0 108.32 L134.0 108.94 L135.0 109.54 L136.0 110.12 L137.0 110.68 L138.0 111.20 L139.0 111.68 L140.0 112.10 L141.0 112.47 L142.0 112.77 L143.0 112.99 L144.0 113.14 L145.0 113.20 L146.0 113.18 L147.0 113.08 L148.0 112.90 L149.0 112.64 L150.0 112.31 L151.0 111.91 L152.0 111.46 L153.0 110.95 L154.0 110.40 L155.0 109.83 L156.0 109.22 L157.0 108.60 L158.0 107.97 L159.0 107.33 L160.0 106.69 L161.0 106.06 L162.0 105.44 L163.0 104.83 L164.0 104.24 L165.0 103.66 L166.0 103.11 L167.0 102.57 L168.0 102.05 L169.0 101.55 L170.0 101.07 L171.0 100.61 L172.0 100.17 L173.0 99.75 L174.0 99.35 L175.0 98.97 L176.0 98.60 L177.0 98.25 L178.0 97.91 L179.0 97.59 L180.0 97.28 L181.0 96.99 L182.0 96.71 L183.0 96.44 L184.0 96.18 L185.0 95.93 L186.0 95.69 L187.0 95.46 L188.0 95.24 L189.0 95.02 L190.0 94.82 L191.0 94.62 L192.0 94.42 L193.0 94.24 L194.0 94.06 L195.0 93.88 L196.0 93.71 L197.0 93.54 L198.0 93.38 L199.0 93.22 L200.0 93.07 L201.0 92.92 L202.0 92.77 L203.0 92.63 L204.0 92.48 L205.0 92.34 L206.0 92.21 L207.0 92.07 L208.0 91.94 L209.0 91.81 L210.0 91.68 L211.0 91.55 L212.0 91.42 L213.0 91.29 L214.0 91.17 L215.0 91.05 L216.0 90.92 L217.0 90.80 L218.0 90.68 L219.0 90.56 L220.0 90.44 L221.0 90.32 L222.0 90.20 L223.0 90.08 L224.0 89.96 L225.0 89.85 L226.0 89.73 L227.0 89.61 L228.0 89.49 L229.0 89.38 L230.0 89.26 L231.0 89.14 L232.0 89.03 L233.0 88.91 L234.0 88.80 L235.0 88.68 L236.0 88.56 L237.0 88.45 L238.0 88.33 L239.0 88.22 L240.0 88.10 L241.0 87.99 L242.0 87.87 L243.0 87.76 L244.0 87.64 L245.0 87.53 L246.0 87.41 L247.0 87.30 L248.0 87.18 L249.0 87.07 L250.0 86.96 L251.0 86.85 L252.0 86.74 L253.0 86.62 L254.0 86.51 L255.0 86.40 L256.0 86.30 L257.0 86.19 L258.0 86.08 L259.0 85.97 L260.0 85.87 L261.0 85.76 L262.0 85.66 L263.0 85.56 L264.0 85.45 L265.0 85.35 L266.0 85.26 L267.0 85.16 L268.0 85.06 L269.0 84.97 L270.0 84.87 L271.0 84.78 L272.0 84.69 L273.0 84.60 L274.0 84.51 L275.0 84.43 L276.0 84.35 L277.0 84.26 L278.0 84.19 L279.0 84.11 L280.0 84.03 L281.0 83.96 L282.0 83.89 L283.0 83.82 L284.0 83.75 L285.0 83.69 L286.0 83.63 L287.0 83.57 L288.0 83.51 L289.0 83.45 L290.0 83.40 L291.0 83.35 L292.0 83.30 L293.0 83.26 L294.0 83.22 L295.0 83.18 L296.0 83.14 L297.0 83.11 L298.0 83.08 L299.0 83.05 L300.0 83.03 L301.0 83.00 L302.0 82.98 L303.0 82.97 L304.0 82.95 L305.0 82.94 L306.0 82.93 L307.0 82.93 L308.0 82.93 L309.0 82.93 L310.0 82.93 L311.0 82.93 L312.0 82.94 L313.0 82.96 L314.0 82.97 L315.0 82.99 L316.0 83.01 L317.0 83.03 L318.0 83.05 L319.0 83.08 L320.0 83.11 L321.0 83.15 L322.0 83.18 L323.0 83.22 L324.0 83.26 L325.0 83.30 L326.0 83.35 L327.0 83.40 L328.0 83.45 L329.0 83.50 L330.0 83.56 L331.0 83.61 L332.0 83.67 L333.0 83.73 L334.0 83.79 L335.0 83.86 L336.0 83.93 L337.0 83.99 L338.0 84.06 L339.0 84.14 L340.0 84.21 L341.0 84.28 L342.0 84.36 L343.0 84.44 L344.0 84.52 L345.0 84.60 L346.0 84.68 L347.0 84.76 L348.0 84.84 L349.0 84.93 L350.0 85.01 L351.0 85.10 L352.0 85.19 L353.0 85.28 L354.0 85.36 L355.0 85.45 L356.0 85.54 L357.0 85.63 L358.0 85.72 L359.0 85.81 L360.0 85.90 L361.0 86.00 L362.0 86.09 L363.0 86.18 L364.0 86.27 L365.0 86.36 L366.0 86.54 L367.0 86.74 L368.0 86.93 L369.0 87.11 L370.0 87.29 L371.0 87.47 L372.0 87.64 L373.0 87.81 L374.0 87.97 L375.0 88.13 L376.0 88.28 L377.0 88.43 L378.0 88.58 L379.0 88.72 L380.0 88.85 L381.0 88.98 L382.0 89.11 L383.0 89.24 L384.0 89.35 L385.0 89.47 L386.0 89.58 L387.0 89.68 L388.0 89.79 L389.0 89.88 L390.0 89.98 L391.0 90.07 L392.0 90.16 L393.0 90.24 L394.0 90.32 L395.0 90.39 L396.0 90.46 L397.0 90.53 L398.0 90.60 L399.0 90.66 L400.0 90.72 L401.0 90.77 L402.0 90.83 L403.0 90.88 L404.0 90.92 L405.0 90.97 L406.0 91.01 L407.0 91.05 L408.0 91.08 L408.5 91.1 L37.0 91.1 Z" fill="rgba(200,200,200,.42)"/><rect x="37" y="90.5" width="371.5" height="1.4" fill="#a8a8a8"/><path d="M37.0 92.07 L38.0 92.08 L39.0 92.10 L40.0 92.12 L41.0 92.14 L42.0 92.16 L43.0 92.18 L44.0 92.20 L45.0 92.22 L46.0 92.24 L47.0 92.26 L48.0 92.29 L49.0 92.31 L50.0 92.33 L51.0 92.36 L52.0 92.38 L53.0 92.41 L54.0 92.44 L55.0 92.47 L56.0 92.49 L57.0 92.52 L58.0 92.55 L59.0 92.59 L60.0 92.62 L61.0 92.65 L62.0 92.69 L63.0 92.72 L64.0 92.76 L65.0 92.80 L66.0 92.84 L67.0 92.88 L68.0 92.92 L69.0 92.97 L70.0 93.01 L71.0 93.06 L72.0 93.11 L73.0 93.16 L74.0 93.21 L75.0 93.26 L76.0 93.32 L77.0 93.38 L78.0 93.44 L79.0 93.50 L80.0 93.57 L81.0 93.64 L82.0 93.71 L83.0 93.78 L84.0 93.86 L85.0 93.94 L86.0 94.02 L87.0 94.11 L88.0 94.20 L89.0 94.30 L90.0 94.40 L91.0 94.50 L92.0 94.61 L93.0 94.72 L94.0 94.84 L95.0 94.96 L96.0 95.09 L97.0 95.23 L98.0 95.37 L99.0 95.52 L100.0 95.67 L101.0 95.84 L102.0 96.01 L103.0 96.19 L104.0 96.38 L105.0 96.58 L106.0 96.79 L107.0 97.01 L108.0 97.24 L109.0 97.48 L110.0 97.74 L111.0 98.01 L112.0 98.29 L113.0 98.59 L114.0 98.90 L115.0 99.23 L116.0 99.58 L117.0 99.95 L118.0 100.33 L119.0 100.73 L120.0 101.16 L121.0 101.60 L122.0 102.06 L123.0 102.55 L124.0 103.05 L125.0 103.58 L126.0 104.12 L127.0 104.68 L128.0 105.26 L129.0 105.86 L130.0 106.47 L131.0 107.08 L132.0 107.70 L133.0 108.32 L134.0 108.94 L135.0 109.54 L136.0 110.12 L137.0 110.68 L138.0 111.20 L139.0 111.68 L140.0 112.10 L141.0 112.47 L142.0 112.77 L143.0 112.99 L144.0 113.14 L145.0 113.20 L146.0 113.18 L147.0 113.08 L148.0 112.90 L149.0 112.64 L150.0 112.31 L151.0 111.91 L152.0 111.46 L153.0 110.95 L154.0 110.40 L155.0 109.83 L156.0 109.22 L157.0 108.60 L158.0 107.97 L159.0 107.33 L160.0 106.69 L161.0 106.06 L162.0 105.44 L163.0 104.83 L164.0 104.24 L165.0 103.66 L166.0 103.11 L167.0 102.57 L168.0 102.05 L169.0 101.55 L170.0 101.07 L171.0 100.61 L172.0 100.17 L173.0 99.75 L174.0 99.35 L175.0 98.97 L176.0 98.60 L177.0 98.25 L178.0 97.91 L179.0 97.59 L180.0 97.28 L181.0 96.99 L182.0 96.71 L183.0 96.44 L184.0 96.18 L185.0 95.93 L186.0 95.69 L187.0 95.46 L188.0 95.24 L189.0 95.02 L190.0 94.82 L191.0 94.62 L192.0 94.42 L193.0 94.24 L194.0 94.06 L195.0 93.88 L196.0 93.71 L197.0 93.54 L198.0 93.38 L199.0 93.22 L200.0 93.07 L201.0 92.92 L202.0 92.77 L203.0 92.63 L204.0 92.48 L205.0 92.34 L206.0 92.21 L207.0 92.07 L208.0 91.94 L209.0 91.81 L210.0 91.68 L211.0 91.55 L212.0 91.42 L213.0 91.29 L214.0 91.17 L215.0 91.05 L216.0 90.92 L217.0 90.80 L218.0 90.68 L219.0 90.56 L220.0 90.44 L221.0 90.32 L222.0 90.20 L223.0 90.08 L224.0 89.96 L225.0 89.85 L226.0 89.73 L227.0 89.61 L228.0 89.49 L229.0 89.38 L230.0 89.26 L231.0 89.14 L232.0 89.03 L233.0 88.91 L234.0 88.80 L235.0 88.68 L236.0 88.56 L237.0 88.45 L238.0 88.33 L239.0 88.22 L240.0 88.10 L241.0 87.99 L242.0 87.87 L243.0 87.76 L244.0 87.64 L245.0 87.53 L246.0 87.41 L247.0 87.30 L248.0 87.18 L249.0 87.07 L250.0 86.96 L251.0 86.85 L252.0 86.74 L253.0 86.62 L254.0 86.51 L255.0 86.40 L256.0 86.30 L257.0 86.19 L258.0 86.08 L259.0 85.97 L260.0 85.87 L261.0 85.76 L262.0 85.66 L263.0 85.56 L264.0 85.45 L265.0 85.35 L266.0 85.26 L267.0 85.16 L268.0 85.06 L269.0 84.97 L270.0 84.87 L271.0 84.78 L272.0 84.69 L273.0 84.60 L274.0 84.51 L275.0 84.43 L276.0 84.35 L277.0 84.26 L278.0 84.19 L279.0 84.11 L280.0 84.03 L281.0 83.96 L282.0 83.89 L283.0 83.82 L284.0 83.75 L285.0 83.69 L286.0 83.63 L287.0 83.57 L288.0 83.51 L289.0 83.45 L290.0 83.40 L291.0 83.35 L292.0 83.30 L293.0 83.26 L294.0 83.22 L295.0 83.18 L296.0 83.14 L297.0 83.11 L298.0 83.08 L299.0 83.05 L300.0 83.03 L301.0 83.00 L302.0 82.98 L303.0 82.97 L304.0 82.95 L305.0 82.94 L306.0 82.93 L307.0 82.93 L308.0 82.93 L309.0 82.93 L310.0 82.93 L311.0 82.93 L312.0 82.94 L313.0 82.96 L314.0 82.97 L315.0 82.99 L316.0 83.01 L317.0 83.03 L318.0 83.05 L319.0 83.08 L320.0 83.11 L321.0 83.15 L322.0 83.18 L323.0 83.22 L324.0 83.26 L325.0 83.30 L326.0 83.35 L327.0 83.40 L328.0 83.45 L329.0 83.50 L330.0 83.56 L331.0 83.61 L332.0 83.67 L333.0 83.73 L334.0 83.79 L335.0 83.86 L336.0 83.93 L337.0 83.99 L338.0 84.06 L339.0 84.14 L340.0 84.21 L341.0 84.28 L342.0 84.36 L343.0 84.44 L344.0 84.52 L345.0 84.60 L346.0 84.68 L347.0 84.76 L348.0 84.84 L349.0 84.93 L350.0 85.01 L351.0 85.10 L352.0 85.19 L353.0 85.28 L354.0 85.36 L355.0 85.45 L356.0 85.54 L357.0 85.63 L358.0 85.72 L359.0 85.81 L360.0 85.90 L361.0 86.00 L362.0 86.09 L363.0 86.18 L364.0 86.27 L365.0 86.36 L366.0 86.54 L367.0 86.74 L368.0 86.93 L369.0 87.11 L370.0 87.29 L371.0 87.47 L372.0 87.64 L373.0 87.81 L374.0 87.97 L375.0 88.13 L376.0 88.28 L377.0 88.43 L378.0 88.58 L379.0 88.72 L380.0 88.85 L381.0 88.98 L382.0 89.11 L383.0 89.24 L384.0 89.35 L385.0 89.47 L386.0 89.58 L387.0 89.68 L388.0 89.79 L389.0 89.88 L390.0 89.98 L391.0 90.07 L392.0 90.16 L393.0 90.24 L394.0 90.32 L395.0 90.39 L396.0 90.46 L397.0 90.53 L398.0 90.60 L399.0 90.66 L400.0 90.72 L401.0 90.77 L402.0 90.83 L403.0 90.88 L404.0 90.92 L405.0 90.97 L406.0 91.01 L407.0 91.05 L408.0 91.08" stroke="#b4b4b4" stroke-width="1.2" fill="none"/></svg>
<div class="t" style="left:510px;top:298.8px;font-size:10px;color:#7bbde0;width:25px;text-align:right">+30</div>
<div class="t" style="left:921px;top:298.8px;font-size:10px;color:#7bbde0;width:25px;text-align:right">+30</div>
<div class="t" style="left:510px;top:312.80833333333334px;font-size:10px;color:#7bbde0;width:25px;text-align:right">+25</div>
<div class="t" style="left:921px;top:312.80833333333334px;font-size:10px;color:#7bbde0;width:25px;text-align:right">+25</div>
<div class="t" style="left:510px;top:326.81666666666666px;font-size:10px;color:#7bbde0;width:25px;text-align:right">+20</div>
<div class="t" style="left:921px;top:326.81666666666666px;font-size:10px;color:#7bbde0;width:25px;text-align:right">+20</div>
<div class="t" style="left:510px;top:340.825px;font-size:10px;color:#7bbde0;width:25px;text-align:right">+15</div>
<div class="t" style="left:921px;top:340.825px;font-size:10px;color:#7bbde0;width:25px;text-align:right">+15</div>
<div class="t" style="left:510px;top:354.8333333333333px;font-size:10px;color:#7bbde0;width:25px;text-align:right">+10</div>
<div class="t" style="left:921px;top:354.8333333333333px;font-size:10px;color:#7bbde0;width:25px;text-align:right">+10</div>
<div class="t" style="left:510px;top:368.84166666666664px;font-size:10px;color:#7bbde0;width:25px;text-align:right">+ 5</div>
<div class="t" style="left:921px;top:368.84166666666664px;font-size:10px;color:#7bbde0;width:25px;text-align:right">+5</div>
<div class="t" style="left:510px;top:382.85px;font-size:10px;color:#7bbde0;width:25px;text-align:right">0</div>
<div class="t" style="left:921px;top:382.85px;font-size:10px;color:#7bbde0;width:25px;text-align:right">0</div>
<div class="t" style="left:510px;top:396.85833333333335px;font-size:10px;color:#7bbde0;width:25px;text-align:right">- 5</div>
<div class="t" style="left:921px;top:396.85833333333335px;font-size:10px;color:#7bbde0;width:25px;text-align:right">-5</div>
<div class="t" style="left:510px;top:410.8666666666667px;font-size:10px;color:#7bbde0;width:25px;text-align:right">-10</div>
<div class="t" style="left:921px;top:410.8666666666667px;font-size:10px;color:#7bbde0;width:25px;text-align:right">-10</div>
<div class="t" style="left:510px;top:424.875px;font-size:10px;color:#7bbde0;width:25px;text-align:right">-15</div>
<div class="t" style="left:921px;top:424.875px;font-size:10px;color:#7bbde0;width:25px;text-align:right">-15</div>
<div class="t" style="left:510px;top:438.8833333333333px;font-size:10px;color:#7bbde0;width:25px;text-align:right">-20</div>
<div class="t" style="left:921px;top:438.8833333333333px;font-size:10px;color:#7bbde0;width:25px;text-align:right">-20</div>
<div class="t" style="left:510px;top:452.89166666666665px;font-size:10px;color:#7bbde0;width:25px;text-align:right">-25</div>
<div class="t" style="left:921px;top:452.89166666666665px;font-size:10px;color:#7bbde0;width:25px;text-align:right">-25</div>
<div class="t" style="left:510px;top:466.9px;font-size:10px;color:#7bbde0;width:25px;text-align:right">-30</div>
<div class="t" style="left:921px;top:466.9px;font-size:10px;color:#7bbde0;width:25px;text-align:right">-30</div>
<div class="t" style="left:549px;top:309px;font-size:11px;color:#7bbde0">dB</div>
<div class="t" style="left:899px;top:309px;font-size:11px;color:#7bbde0">dB</div>
<div class="t" style="left:526.0px;top:390.5px;font-size:10px;color:#c8c8c8;width:40px;text-align:center">20</div>
<div class="t" style="left:575.278237740554px;top:390.5px;font-size:10px;color:#c8c8c8;width:40px;text-align:center">50</div>
<div class="t" style="left:612.5557855369436px;top:390.5px;font-size:10px;color:#c8c8c8;width:40px;text-align:center">100</div>
<div class="t" style="left:649.8333333333334px;top:390.5px;font-size:10px;color:#c8c8c8;width:40px;text-align:center">200</div>
<div class="t" style="left:699.1115710738874px;top:390.5px;font-size:10px;color:#c8c8c8;width:40px;text-align:center">500</div>
<div class="t" style="left:736.389118870277px;top:390.5px;font-size:10px;color:#c8c8c8;width:40px;text-align:center">1k</div>
<div class="t" style="left:773.6666666666666px;top:390.5px;font-size:10px;color:#c8c8c8;width:40px;text-align:center">2k</div>
<div class="t" style="left:822.9449044072206px;top:390.5px;font-size:10px;color:#c8c8c8;width:40px;text-align:center">5k</div>
<div class="t" style="left:860.2224522036104px;top:390.5px;font-size:10px;color:#c8c8c8;width:40px;text-align:center">10k</div>
<div class="t" style="left:897.5px;top:390.5px;font-size:10px;color:#c8c8c8;width:40px;text-align:center">20k</div>
<div style="left:436px;top:481px;width:525px;height:1px;background:#2c3848"></div>
<div style="left:436px;top:482px;width:525px;height:1px;background:#7a8ba0"></div>
<div style="left:509px;top:485px;width:446px;height:56px;background:#29333f;border:1px solid #161c26;border-radius:3px;box-shadow:0 1px 0 rgba(255,255,255,.12)"></div>
<div class="t" style="left:436px;top:493px;font-size:10px;font-weight:bold;color:#c4ced8;width:66px;text-align:center">Frequency</div>
<div class="t" style="left:436px;top:509px;font-size:10px;font-weight:bold;color:#c4ced8;width:66px;text-align:center">Gain/Slope</div>
<div style="left:447px;top:523px;width:33px;height:13px;background:linear-gradient(#9ee4fb,#4fb8ea);border:1px solid #1c2a3a;border-radius:2px"></div>
<svg style="left:451px;top:525px" width="26" height="9"><path d="M2 2 H9 V7 H2 Z M12 2 H19 V7 H12 Z M16 4.5 H24" fill="none" stroke="#173a6a" stroke-width="1.4"/><path d="M9 4.5 H12" stroke="#173a6a" stroke-width="1.4"/></svg>
<div class="t" style="left:486px;top:524px;font-size:10px;font-weight:bold;color:#c4ced8">Q</div>
<div class="t" style="left:506px;top:490px;font-size:11px;color:#414d5a;width:60px;text-align:center">200Hz</div>
<div class="t" style="left:506px;top:507px;font-size:11px;color:#414d5a;width:60px;text-align:center">24dB/Oct</div>
<div class="t" style="left:506px;top:524px;font-size:11px;color:#414d5a;width:60px;text-align:center">0.71</div>
<div class="t" style="left:561px;top:490px;font-size:11px;color:#414d5a;width:60px;text-align:center">80.0Hz</div>
<div class="t" style="left:561px;top:507px;font-size:11px;color:#414d5a;width:60px;text-align:center">0.0dB</div>
<div class="t" style="left:561px;top:524px;font-size:11px;color:#414d5a;width:60px;text-align:center">1.10</div>
<div class="t" style="left:616px;top:490px;font-size:11px;color:#414d5a;width:60px;text-align:center">200Hz</div>
<div class="t" style="left:616px;top:507px;font-size:11px;color:#414d5a;width:60px;text-align:center">0.0dB</div>
<div class="t" style="left:616px;top:524px;font-size:11px;color:#414d5a;width:60px;text-align:center">0.98</div>
<div class="t" style="left:671px;top:490px;font-size:11px;color:#414d5a;width:60px;text-align:center">500Hz</div>
<div class="t" style="left:671px;top:507px;font-size:11px;color:#414d5a;width:60px;text-align:center">0.0dB</div>
<div class="t" style="left:671px;top:524px;font-size:11px;color:#414d5a;width:60px;text-align:center">0.71</div>
<div class="t" style="left:726px;top:490px;font-size:11px;color:#86c4e8;width:60px;text-align:center">3000Hz</div>
<div class="t" style="left:726px;top:507px;font-size:11px;color:#86c4e8;width:60px;text-align:center">+3.0dB</div>
<div class="t" style="left:726px;top:524px;font-size:11px;color:#86c4e8;width:60px;text-align:center">0.25</div>
<div class="t" style="left:781px;top:490px;font-size:11px;color:#86c4e8;width:60px;text-align:center">150Hz</div>
<div class="t" style="left:781px;top:507px;font-size:11px;color:#86c4e8;width:60px;text-align:center">-8.0dB</div>
<div class="t" style="left:781px;top:524px;font-size:11px;color:#86c4e8;width:60px;text-align:center">0.25</div>
<div class="t" style="left:836px;top:490px;font-size:11px;color:#414d5a;width:60px;text-align:center">10000Hz</div>
<div class="t" style="left:836px;top:507px;font-size:11px;color:#414d5a;width:60px;text-align:center">0.0dB</div>
<div class="t" style="left:836px;top:524px;font-size:11px;color:#414d5a;width:60px;text-align:center">0.71</div>
<div class="t" style="left:891px;top:490px;font-size:11px;color:#414d5a;width:60px;text-align:center">300Hz</div>
<div class="t" style="left:891px;top:507px;font-size:11px;color:#414d5a;width:60px;text-align:center">12dB/Oct</div>
<div class="t" style="left:891px;top:524px;font-size:11px;color:#414d5a;width:60px;text-align:center">0.71</div>
<svg style="left:442px;top:565px" width="8" height="9"><path d="M0.5 0.5 L7.5 4.5 L0.5 8.5 Z" fill="#a8a8a8"/></svg>
<div class="t" style="left:620px;top:562px;font-size:16px;font-weight:bold;color:#d4d4d4;width:157px;text-align:center">Channel EQ</div>
<div style="left:957px;top:213px;width:20px;height:21px;background:#fff"></div>
<div style="left:957px;top:234px;width:20px;height:3px;background:linear-gradient(90deg,#9a9a9a,#c8c8c8)"></div>
<svg style="left:958px;top:214px" width="18" height="20"><path d="M3.5 3.2 L3.5 15.8 L6.4 13 L8.6 17.8 L10.6 16.9 L8.5 12.2 L12.4 12.2 Z" fill="#000" stroke="#eee" stroke-width="0.8"/></svg>
<div style="left:18px;top:111px;width:56px;height:15px;border:1px solid #868686;border-radius:3px;background:linear-gradient(#fdfdfd 0,#fdfdfd 1px,#dddddd 2px,#d5d5d5 50%,#c7c7c7 52%,#c6c6c6 85%,#d6d6d6);box-shadow:0 1px 0 rgba(255,255,255,.55);font-size:9.6px;font-weight:bold;color:#000;text-align:center;line-height:13px;white-space:nowrap;">löschen</div>
<div style="left:18px;top:131px;width:56px;height:21px;background:#27313b;border:1px solid #3a3f44;border-bottom-color:#e8e8e8"></div>
<svg style="left:18px;top:131px" width="56" height="21"><path d="M4 10 C10 10.5 14 11 18.5 13 C24 10.5 30 9.5 36 9 C44 8.8 48 9.5 52 10" stroke="#34c843" stroke-width="1.3" fill="none"/></svg>
<div class="t" style="left:6px;top:154px;width:80px;height:12px;line-height:12px;text-align:center;font-size:9.5px;font-weight:bold;color:#666">Inserts</div>
<div style="left:18px;top:167px;width:56px;height:15px;border:1px solid #2f87b3;border-radius:3px;background:linear-gradient(#b5ecfb,#86d6f1 50%,#5cc3e6 51%,#74d0ee);box-shadow:0 1px 0 rgba(255,255,255,.5);font-size:9.6px;font-weight:bold;color:#000;text-align:center;line-height:13px;white-space:nowrap;">Dist II</div>
<div style="left:18px;top:184px;width:56px;height:15px;border:1px solid #2f87b3;border-radius:3px;background:linear-gradient(#b5ecfb,#86d6f1 50%,#5cc3e6 51%,#74d0ee);box-shadow:0 1px 0 rgba(255,255,255,.5);font-size:9.6px;font-weight:bold;color:#000;text-align:center;line-height:13px;white-space:nowrap;">P-Dist</div>
<div style="left:18px;top:201px;width:56px;height:15px;border:1px solid #2f87b3;border-radius:3px;background:linear-gradient(#b5ecfb,#86d6f1 50%,#5cc3e6 51%,#74d0ee);box-shadow:0 1px 0 rgba(255,255,255,.5);font-size:9.6px;font-weight:bold;color:#000;text-align:center;line-height:13px;white-space:nowrap;">Bitcrusher</div>
<div style="left:18px;top:218px;width:56px;height:15px;border:1px solid #2f87b3;border-radius:3px;background:linear-gradient(#b5ecfb,#86d6f1 50%,#5cc3e6 51%,#74d0ee);box-shadow:0 1px 0 rgba(255,255,255,.5);font-size:9.6px;font-weight:bold;color:#000;text-align:center;line-height:13px;white-space:nowrap;">Phaser</div>
<div style="left:18px;top:235px;width:56px;height:15px;border:1px solid #2f87b3;border-radius:3px;background:linear-gradient(#b5ecfb,#86d6f1 50%,#5cc3e6 51%,#74d0ee);box-shadow:0 1px 0 rgba(255,255,255,.5);font-size:9.6px;font-weight:bold;color:#000;text-align:center;line-height:13px;white-space:nowrap;">Chan EQ</div>
<div style="left:18px;top:252px;width:56px;height:15px;border:1px solid #868686;border-radius:3px;background:linear-gradient(#fdfdfd 0,#fdfdfd 1px,#dddddd 2px,#d5d5d5 50%,#c7c7c7 52%,#c6c6c6 85%,#d6d6d6);box-shadow:0 1px 0 rgba(255,255,255,.55);font-size:9.6px;font-weight:bold;color:#000;text-align:center;line-height:13px;white-space:nowrap;"></div>
<div style="left:18px;top:269px;width:56px;height:15px;border:1px solid #868686;border-radius:3px;background:linear-gradient(#fdfdfd 0,#fdfdfd 1px,#dddddd 2px,#d5d5d5 50%,#c7c7c7 52%,#c6c6c6 85%,#d6d6d6);box-shadow:0 1px 0 rgba(255,255,255,.55);font-size:9.6px;font-weight:bold;color:#000;text-align:center;line-height:13px;white-space:nowrap;"></div>
<div class="t" style="left:6px;top:286px;width:80px;height:12px;line-height:12px;text-align:center;font-size:9.5px;font-weight:bold;color:#666">Sends</div>
<div style="left:18px;top:299px;width:39px;height:15px;border:1px solid #868686;border-radius:3px;background:linear-gradient(#fdfdfd 0,#fdfdfd 1px,#dddddd 2px,#d5d5d5 50%,#c7c7c7 52%,#c6c6c6 85%,#d6d6d6);box-shadow:0 1px 0 rgba(255,255,255,.55);font-size:9.6px;font-weight:bold;color:#000;text-align:center;line-height:13px;white-space:nowrap;"></div>
<div style="left:18px;top:316px;width:39px;height:15px;border:1px solid #868686;border-radius:3px;background:linear-gradient(#fdfdfd 0,#fdfdfd 1px,#dddddd 2px,#d5d5d5 50%,#c7c7c7 52%,#c6c6c6 85%,#d6d6d6);box-shadow:0 1px 0 rgba(255,255,255,.55);font-size:9.6px;font-weight:bold;color:#000;text-align:center;line-height:13px;white-space:nowrap;"></div>
<div class="t" style="left:6px;top:333px;width:80px;height:12px;line-height:12px;text-align:center;font-size:9.5px;font-weight:bold;color:#666">I/O</div>
<div style="left:18px;top:346px;width:56px;height:15px;border:1px solid #868686;border-radius:3px;background:linear-gradient(#fdfdfd 0,#fdfdfd 1px,#dddddd 2px,#d5d5d5 50%,#c7c7c7 52%,#c6c6c6 85%,#d6d6d6);box-shadow:0 1px 0 rgba(255,255,255,.55);font-size:9.6px;font-weight:bold;color:#000;text-align:center;line-height:13px;white-space:nowrap;">Bus 10</div>
<div style="left:18px;top:363px;width:56px;height:15px;border:1px solid #868686;border-radius:3px;background:linear-gradient(#fdfdfd 0,#fdfdfd 1px,#dddddd 2px,#d5d5d5 50%,#c7c7c7 52%,#c6c6c6 85%,#d6d6d6);box-shadow:0 1px 0 rgba(255,255,255,.55);font-size:9.6px;font-weight:bold;color:#000;text-align:center;line-height:13px;white-space:nowrap;">Stereo Out</div>
<div style="left:18px;top:380px;width:56px;height:15px;background:#999;border:1px solid #8c8c8c;border-bottom-color:#ddd"></div>
<div style="left:18px;top:397px;width:56px;height:15px;border:1px solid #868686;border-radius:3px;background:linear-gradient(#fdfdfd 0,#fdfdfd 1px,#dddddd 2px,#d5d5d5 50%,#c7c7c7 52%,#c6c6c6 85%,#d6d6d6);box-shadow:0 1px 0 rgba(255,255,255,.55);font-size:9.6px;font-weight:bold;color:#000;text-align:center;line-height:13px;white-space:nowrap;">Aus</div>
<div style="left:18px;top:419px;width:17px;height:10px;background:#111;color:#f08a18;font-size:10px;font-weight:bold;text-align:center;line-height:10px;letter-spacing:-0.5px">7.2</div>
<div style="left:18px;top:431px;width:8px;height:139px;background:repeating-linear-gradient(#7a4b30 0px,#7a4b30 1px,#262220 1px,#262220 2px);border:1px solid #222;border-top-width:2px"></div>
<div style="left:27px;top:431px;width:8px;height:139px;background:repeating-linear-gradient(#7a4b30 0px,#7a4b30 1px,#262220 1px,#262220 2px);border:1px solid #222;border-top-width:2px"></div>
<svg style="left:39px;top:417px" width="35" height="35"><defs><radialGradient id="kn0" cx="0.5" cy="0.35" r="0.6"><stop offset="0" stop-color="#f4f4f4"/><stop offset="1" stop-color="#d6d6d6"/></radialGradient></defs><circle cx="17.3" cy="17.4" r="16.4" fill="#9b9b9b" stroke="#d8d8d8" stroke-width="0.8"/><path d="M7 27 A14 14 0 0 0 27.6 27 L22 21.5 A7 7 0 0 1 12.6 21.5 Z" fill="#b9b9b9"/><circle cx="17.3" cy="16.8" r="10.6" fill="url(#kn0)" stroke="#8a8a8a" stroke-width="0.5"/></svg>
<div style="left:42px;top:458px;width:5px;height:94px;background:linear-gradient(90deg,#8a8a8a,#a5a5a5);border-radius:1px"></div>
<div style="left:43px;top:488px;width:4px;height:63px;background:#7fd3f0"></div>
<div style="left:42px;top:475px;width:31px;height:14px;background:linear-gradient(90deg,#d0d0d0,#fdfdfd 15%,#e0e0e0 30%,#c8c8c8);border:1px solid #8a8a8a;border-radius:2px;box-shadow:0 1px 2px rgba(0,0,0,.35)"></div>
<div style="left:47px;top:477px;width:25px;height:10px;background:#2a2a2a;color:#6fd0f5;font-size:10px;text-align:center;line-height:10px">0.0</div>
<div style="left:45px;top:558px;width:12px;height:12px;border:1px solid #999;border-radius:3px;background:linear-gradient(#f5f5f5,#d9d9d9);box-shadow:0 1px 1px rgba(255,255,255,.7);font-size:10px;font-weight:normal;color:#4a4a4a;text-align:center;line-height:10px;white-space:nowrap;">M</div>
<div style="left:60px;top:558px;width:13px;height:12px;border:1px solid #999;border-radius:3px;background:linear-gradient(#f5f5f5,#d9d9d9);box-shadow:0 1px 1px rgba(255,255,255,.7);font-size:10px;font-weight:normal;color:#4a4a4a;text-align:center;line-height:10px;white-space:nowrap;">S</div>
<div style="left:18px;top:575px;width:23px;height:12px;border:1px solid #999;border-radius:3px;background:linear-gradient(#f5f5f5,#d9d9d9);box-shadow:0 1px 1px rgba(255,255,255,.7);font-size:9px;font-weight:bold;color:#000;text-align:center;line-height:10px;white-space:nowrap;"><svg width="14" height="8" style="position:relative;top:1px"><circle cx="4.5" cy="4" r="3.3" fill="none" stroke="#444" stroke-width="1.2"/><circle cx="9.5" cy="4" r="3.3" fill="none" stroke="#444" stroke-width="1.2"/></svg></div>
<div style="left:45px;top:575px;width:12px;height:12px;border:1px solid #999;border-radius:3px;background:linear-gradient(#f5f5f5,#d9d9d9);box-shadow:0 1px 1px rgba(255,255,255,.7);font-size:10px;font-weight:normal;color:#4a4a4a;text-align:center;line-height:10px;white-space:nowrap;">I</div>
<div style="left:60px;top:575px;width:13px;height:12px;border:1px solid #999;border-radius:3px;background:linear-gradient(#f5f5f5,#d9d9d9);box-shadow:0 1px 1px rgba(255,255,255,.7);font-size:10px;font-weight:normal;color:#4a4a4a;text-align:center;line-height:10px;white-space:nowrap;">R</div>
<div style="left:18px;top:596px;width:56px;height:12px;background:#6cb083;border-radius:4px;font-size:9.4px;font-weight:bold;color:#0a0a20;line-height:12px;padding-left:3px;white-space:nowrap;overflow:hidden;letter-spacing:0.1px">Bass Lead_</div>
<div style="left:97px;top:111px;width:56px;height:15px;border:1px solid #868686;border-radius:3px;background:linear-gradient(#fdfdfd 0,#fdfdfd 1px,#dddddd 2px,#d5d5d5 50%,#c7c7c7 52%,#c6c6c6 85%,#d6d6d6);box-shadow:0 1px 0 rgba(255,255,255,.55);font-size:9.6px;font-weight:bold;color:#5d5d5d;text-align:center;line-height:13px;white-space:nowrap;">Setting</div>
<div style="left:97px;top:131px;width:56px;height:21px;background:#dcdcdc;border:1px solid #9a9a9a;border-top-color:#5a5a5a;border-bottom-color:#eee;font-size:10px;color:#8a8a8a;text-align:center;line-height:19px">EQ</div>
<div class="t" style="left:85px;top:154px;width:80px;height:12px;line-height:12px;text-align:center;font-size:9.5px;font-weight:bold;color:#666">Inserts</div>
<div style="left:97px;top:167px;width:56px;height:15px;border:1px solid #868686;border-radius:3px;background:linear-gradient(#fdfdfd 0,#fdfdfd 1px,#dddddd 2px,#d5d5d5 50%,#c7c7c7 52%,#c6c6c6 85%,#d6d6d6);box-shadow:0 1px 0 rgba(255,255,255,.55);font-size:9.6px;font-weight:bold;color:#000;text-align:center;line-height:13px;white-space:nowrap;"></div>
<div style="left:97px;top:184px;width:56px;height:15px;border:1px solid #868686;border-radius:3px;background:linear-gradient(#fdfdfd 0,#fdfdfd 1px,#dddddd 2px,#d5d5d5 50%,#c7c7c7 52%,#c6c6c6 85%,#d6d6d6);box-shadow:0 1px 0 rgba(255,255,255,.55);font-size:9.6px;font-weight:bold;color:#000;text-align:center;line-height:13px;white-space:nowrap;"></div>
<div style="left:97px;top:201px;width:56px;height:15px;border:1px solid #868686;border-radius:3px;background:linear-gradient(#fdfdfd 0,#fdfdfd 1px,#dddddd 2px,#d5d5d5 50%,#c7c7c7 52%,#c6c6c6 85%,#d6d6d6);box-shadow:0 1px 0 rgba(255,255,255,.55);font-size:9.6px;font-weight:bold;color:#000;text-align:center;line-height:13px;white-space:nowrap;"></div>
<div style="left:97px;top:218px;width:56px;height:15px;border:1px solid #868686;border-radius:3px;background:linear-gradient(#fdfdfd 0,#fdfdfd 1px,#dddddd 2px,#d5d5d5 50%,#c7c7c7 52%,#c6c6c6 85%,#d6d6d6);box-shadow:0 1px 0 rgba(255,255,255,.55);font-size:9.6px;font-weight:bold;color:#000;text-align:center;line-height:13px;white-space:nowrap;"></div>
<div style="left:97px;top:235px;width:56px;height:15px;border:1px solid #868686;border-radius:3px;background:linear-gradient(#fdfdfd 0,#fdfdfd 1px,#dddddd 2px,#d5d5d5 50%,#c7c7c7 52%,#c6c6c6 85%,#d6d6d6);box-shadow:0 1px 0 rgba(255,255,255,.55);font-size:9.6px;font-weight:bold;color:#000;text-align:center;line-height:13px;white-space:nowrap;"></div>
<div style="left:97px;top:252px;width:56px;height:15px;border:1px solid #868686;border-radius:3px;background:linear-gradient(#fdfdfd 0,#fdfdfd 1px,#dddddd 2px,#d5d5d5 50%,#c7c7c7 52%,#c6c6c6 85%,#d6d6d6);box-shadow:0 1px 0 rgba(255,255,255,.55);font-size:9.6px;font-weight:bold;color:#000;text-align:center;line-height:13px;white-space:nowrap;"></div>
<div style="left:97px;top:269px;width:56px;height:15px;border:1px solid #868686;border-radius:3px;background:linear-gradient(#fdfdfd 0,#fdfdfd 1px,#dddddd 2px,#d5d5d5 50%,#c7c7c7 52%,#c6c6c6 85%,#d6d6d6);box-shadow:0 1px 0 rgba(255,255,255,.55);font-size:9.6px;font-weight:bold;color:#000;text-align:center;line-height:13px;white-space:nowrap;"></div>
<div style="left:97px;top:380px;width:56px;height:15px;background:#999;border:1px solid #8c8c8c;border-bottom-color:#ddd"></div>
<div style="left:97px;top:397px;width:56px;height:15px;border:1px solid #868686;border-radius:3px;background:linear-gradient(#fdfdfd 0,#fdfdfd 1px,#dddddd 2px,#d5d5d5 50%,#c7c7c7 52%,#c6c6c6 85%,#d6d6d6);box-shadow:0 1px 0 rgba(255,255,255,.55);font-size:9.6px;font-weight:bold;color:#000;text-align:center;line-height:13px;white-space:nowrap;">Aus</div>
<div style="left:97px;top:419px;width:17px;height:10px;background:#111;color:#f08a18;font-size:10px;font-weight:bold;text-align:center;line-height:10px;letter-spacing:-0.5px">7.2</div>
<div style="left:97px;top:431px;width:8px;height:139px;background:repeating-linear-gradient(#7a4b30 0px,#7a4b30 1px,#262220 1px,#262220 2px);border:1px solid #222;border-top-width:2px"></div>
<div style="left:106px;top:431px;width:8px;height:139px;background:repeating-linear-gradient(#7a4b30 0px,#7a4b30 1px,#262220 1px,#262220 2px);border:1px solid #222;border-top-width:2px"></div>
<svg style="left:118px;top:417px" width="35" height="35"><defs><radialGradient id="kn1" cx="0.5" cy="0.35" r="0.6"><stop offset="0" stop-color="#f4f4f4"/><stop offset="1" stop-color="#d6d6d6"/></radialGradient></defs><circle cx="17.3" cy="17.4" r="16.4" fill="#9b9b9b" stroke="#d8d8d8" stroke-width="0.8"/><path d="M7 27 A14 14 0 0 0 27.6 27 L22 21.5 A7 7 0 0 1 12.6 21.5 Z" fill="#b9b9b9"/><circle cx="17.3" cy="16.8" r="10.6" fill="url(#kn1)" stroke="#8a8a8a" stroke-width="0.5"/></svg>
<div style="left:121px;top:458px;width:5px;height:94px;background:linear-gradient(90deg,#8a8a8a,#a5a5a5);border-radius:1px"></div>
<div style="left:122px;top:488px;width:4px;height:63px;background:#7fd3f0"></div>
<div style="left:121px;top:475px;width:31px;height:14px;background:linear-gradient(90deg,#d0d0d0,#fdfdfd 15%,#e0e0e0 30%,#c8c8c8);border:1px solid #8a8a8a;border-radius:2px;box-shadow:0 1px 2px rgba(0,0,0,.35)"></div>
<div style="left:126px;top:477px;width:25px;height:10px;background:#2a2a2a;color:#6fd0f5;font-size:10px;text-align:center;line-height:10px">0.0</div>
<div style="left:124px;top:558px;width:12px;height:12px;border:1px solid #999;border-radius:3px;background:linear-gradient(#f5f5f5,#d9d9d9);box-shadow:0 1px 1px rgba(255,255,255,.7);font-size:10px;font-weight:normal;color:#4a4a4a;text-align:center;line-height:10px;white-space:nowrap;">M</div>
<div style="left:139px;top:558px;width:13px;height:12px;border:1px solid #999;border-radius:3px;background:linear-gradient(#f5f5f5,#d9d9d9);box-shadow:0 1px 1px rgba(255,255,255,.7);font-size:10px;font-weight:normal;color:#4a4a4a;text-align:center;line-height:10px;white-space:nowrap;">S</div>
<div style="left:97px;top:575px;width:23px;height:12px;border:1px solid #999;border-radius:3px;background:linear-gradient(#f5f5f5,#d9d9d9);box-shadow:0 1px 1px rgba(255,255,255,.7);font-size:9px;font-weight:bold;color:#000;text-align:center;line-height:10px;white-space:nowrap;"><svg width="14" height="8" style="position:relative;top:1px"><circle cx="4.5" cy="4" r="3.3" fill="none" stroke="#444" stroke-width="1.2"/><circle cx="9.5" cy="4" r="3.3" fill="none" stroke="#444" stroke-width="1.2"/></svg></div>
<div style="left:124px;top:575px;width:28px;height:12px;border:1px solid #999;border-radius:3px;background:linear-gradient(#f5f5f5,#d9d9d9);box-shadow:0 1px 1px rgba(255,255,255,.7);font-size:10px;font-weight:normal;color:#4a4a4a;text-align:center;line-height:10px;white-space:nowrap;">Bnce</div>
<div style="left:97px;top:596px;width:56px;height:12px;background:#b3ae7b;border-radius:4px;font-size:10px;font-weight:bold;color:#0a0a20;line-height:12px;text-align:center">Output</div>
<svg style="left:180px;top:10px" width="7" height="9"><path d="M0 0 L6.5 4.5 L0 9 Z" fill="#bdbdbd"/></svg>
<div class="t" style="left:190px;top:10px;font-size:9.4px;font-weight:bold;color:#dcdcdc">Globale Spuren</div>
<div style="left:325px;top:6px;width:26px;height:13px;border:1px solid #2f2f2f;border-top:none;border-radius:0 0 4px 4px;background:linear-gradient(#6a6a6a,#5a5a5a);box-shadow:inset 0 -1px 0 rgba(255,255,255,.12);"></div>
<svg style="left:333px;top:6px" width="10" height="10"><path d="M5 1 V9 M1 5 H9" stroke="#dcdcdc" stroke-width="2"/></svg>
<div style="left:358px;top:6px;width:26px;height:13px;border:1px solid #2f2f2f;border-top:none;border-radius:0 0 4px 4px;background:linear-gradient(#6a6a6a,#5a5a5a);box-shadow:inset 0 -1px 0 rgba(255,255,255,.12);"></div>
<svg style="left:361px;top:6px" width="22" height="12"><path d="M1 6.5 H6 M3.5 4 V9" stroke="#ddd" stroke-width="1.3"/><path d="M10 4.5 V2 H17.5 V8.5 H15.5" fill="none" stroke="#ddd" stroke-width="1"/><rect x="7.5" y="4.5" width="8" height="6" fill="#9a9a9a" stroke="#ddd" stroke-width="1"/></svg>
<div class="t" style="left:192px;top:43px;font-size:10px;font-weight:bold;color:#e8e8e8">1</div>
<div class="t" style="left:240px;top:43px;font-size:9.1px;font-weight:bold;color:#e8e8e8">Bass Lead</div>
<div style="left:335px;top:41px;width:13px;height:13px;border:1px solid #333;border-radius:3px;background:linear-gradient(#7a7a7a,#626262);font-size:10px;color:#161616;text-align:center;line-height:11px;box-shadow:0 1px 0 rgba(255,255,255,.12);">R</div>
<div style="left:355px;top:41px;width:13px;height:13px;border:1px solid #1e5f8a;border-radius:3px;background:linear-gradient(#a8e4f8,#52bce8);font-size:10px;color:#0b2a46;text-align:center;line-height:11px;">M</div>
<div style="left:370px;top:41px;width:13px;height:13px;border:1px solid #333;border-radius:3px;background:linear-gradient(#7a7a7a,#626262);font-size:10px;color:#161616;text-align:center;line-height:11px;box-shadow:0 1px 0 rgba(255,255,255,.12);">S</div>
<svg style="left:205px;top:77px" width="76" height="46" viewBox="0 0 76 46"><defs><linearGradient id="tg" x1="0" y1="0" x2="0" y2="1"><stop offset="0" stop-color="#c4dcc0"/><stop offset="0.22" stop-color="#a9c8a6"/><stop offset="0.24" stop-color="#8cba86"/><stop offset="1" stop-color="#74a56e"/></linearGradient><linearGradient id="ng" x1="0" y1="0" x2="0" y2="1"><stop offset="0" stop-color="#555"/><stop offset="1" stop-color="#1c2a1c"/></linearGradient></defs><rect x="0.5" y="9.5" width="74" height="34.5" rx="2" fill="url(#tg)" stroke="#3e5a3e" stroke-width="0.8"/><path d="M1 17.2 H74 M1 26.4 H74 M1 35.6 H74" stroke="rgba(50,80,50,.45)" stroke-width="0.8"/><path d="M18.5 1 L18.5 36" stroke="#2a2a2a" stroke-width="1.6"/><ellipse cx="12.4" cy="36.4" rx="6.6" ry="4.4" transform="rotate(-25 12.4 36.4)" fill="url(#ng)"/><path d="M18.5 1 C19.5 6 28 10 29.5 20 C30.5 26 29 31 27.5 34 C28.5 29 28.5 25 27 21 C25 16 20 14 18.5 12 Z" fill="#3a3a3a"/><path d="M18.5 7 C22 11 27 14 28 20" stroke="#2a2a2a" stroke-width="1" fill="none"/><path d="M32.4 25.5 L35 25.5 L36 22 L37 24 L38.5 22.5 L39.5 25 L40.5 25.3 L41.5 21 L42.5 24.5 L44 19 L45 24 L46 16 L47 21 L48.5 12 L50 23 L51 15 L52 19.5 L53 25 L55 21 L56 9.5 L57.5 18 L58.5 13 L60 23 L61 19 L62.5 25 L64 21 L65 25.5 L74.5 25.5 L74.5 27.5 L66 27.5 L65 31 L63.5 29 L62 33 L61 29.5 L59 38 L57.5 30 L56 41 L55 30 L53 37 L52 31 L50.5 34 L49 29 L48 38.5 L46.5 30.5 L45 36 L44 30 L42.5 34 L41 29 L39.5 31.5 L38 28.5 L37 31 L35.5 27.5 L32.4 27.5 Z" fill="#121212"/></svg>
<div class="t" style="left:192px;top:166px;font-size:10px;font-weight:bold;color:#111">2</div>
<div class="t" style="left:240px;top:166px;font-size:9.2px;font-weight:bold;color:#111">Bass Lead_bip</div>
<div style="left:315px;top:163px;width:13px;height:13px;border:1px solid #8a8a8a;border-radius:3px;background:linear-gradient(#f4f4f4,#d4d4d4);font-size:10px;color:#444;text-align:center;line-height:11px;box-shadow:0 1px 0 rgba(255,255,255,.6);">I</div>
<div style="left:335px;top:163px;width:13px;height:13px;border:1px solid #8a8a8a;border-radius:3px;background:linear-gradient(#f4f4f4,#d4d4d4);font-size:10px;color:#444;text-align:center;line-height:11px;box-shadow:0 1px 0 rgba(255,255,255,.6);">R</div>
<div style="left:355px;top:163px;width:13px;height:13px;border:1px solid #8a8a8a;border-radius:3px;background:linear-gradient(#f4f4f4,#d4d4d4);font-size:10px;color:#444;text-align:center;line-height:11px;box-shadow:0 1px 0 rgba(255,255,255,.6);">M</div>
<div style="left:370px;top:163px;width:13px;height:13px;border:1px solid #8a8a8a;border-radius:3px;background:linear-gradient(#f4f4f4,#d4d4d4);font-size:10px;color:#444;text-align:center;line-height:11px;box-shadow:0 1px 0 rgba(255,255,255,.6);">S</div>
<svg style="left:205px;top:199px" width="76" height="46" viewBox="0 0 76 46"><defs><linearGradient id="tg" x1="0" y1="0" x2="0" y2="1"><stop offset="0" stop-color="#c4dcc0"/><stop offset="0.22" stop-color="#a9c8a6"/><stop offset="0.24" stop-color="#8cba86"/><stop offset="1" stop-color="#74a56e"/></linearGradient><linearGradient id="ng" x1="0" y1="0" x2="0" y2="1"><stop offset="0" stop-color="#555"/><stop offset="1" stop-color="#1c2a1c"/></linearGradient></defs><rect x="0.5" y="9.5" width="74" height="34.5" rx="2" fill="url(#tg)" stroke="#3e5a3e" stroke-width="0.8"/><path d="M1 17.2 H74 M1 26.4 H74 M1 35.6 H74" stroke="rgba(50,80,50,.45)" stroke-width="0.8"/><path d="M18.5 1 L18.5 36" stroke="#2a2a2a" stroke-width="1.6"/><ellipse cx="12.4" cy="36.4" rx="6.6" ry="4.4" transform="rotate(-25 12.4 36.4)" fill="url(#ng)"/><path d="M18.5 1 C19.5 6 28 10 29.5 20 C30.5 26 29 31 27.5 34 C28.5 29 28.5 25 27 21 C25 16 20 14 18.5 12 Z" fill="#3a3a3a"/><path d="M18.5 7 C22 11 27 14 28 20" stroke="#2a2a2a" stroke-width="1" fill="none"/><path d="M32.4 25.5 L35 25.5 L36 22 L37 24 L38.5 22.5 L39.5 25 L40.5 25.3 L41.5 21 L42.5 24.5 L44 19 L45 24 L46 16 L47 21 L48.5 12 L50 23 L51 15 L52 19.5 L53 25 L55 21 L56 9.5 L57.5 18 L58.5 13 L60 23 L61 19 L62.5 25 L64 21 L65 25.5 L74.5 25.5 L74.5 27.5 L66 27.5 L65 31 L63.5 29 L62 33 L61 29.5 L59 38 L57.5 30 L56 41 L55 30 L53 37 L52 31 L50.5 34 L49 29 L48 38.5 L46.5 30.5 L45 36 L44 30 L42.5 34 L41 29 L39.5 31.5 L38 28.5 L37 31 L35.5 27.5 L32.4 27.5 Z" fill="#121212"/></svg>
</body></html>
